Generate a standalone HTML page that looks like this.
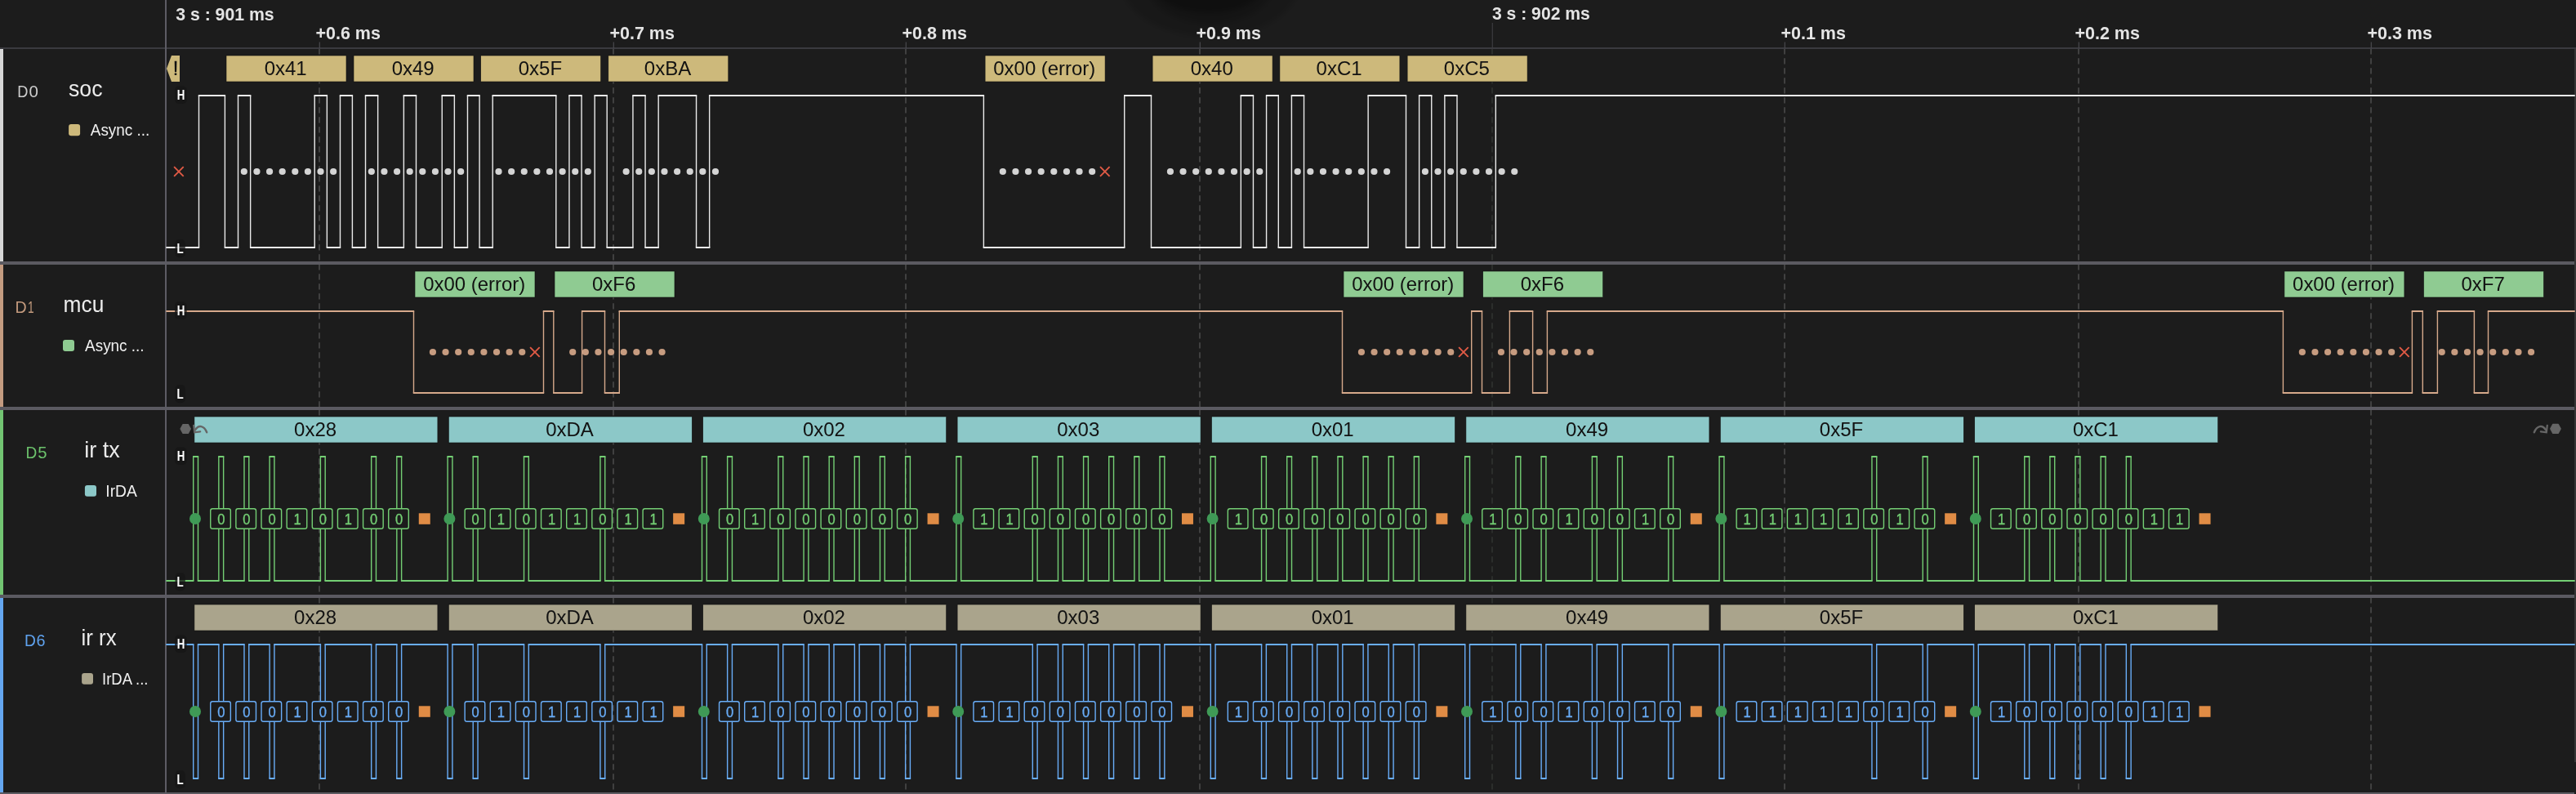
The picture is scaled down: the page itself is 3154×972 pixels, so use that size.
<!DOCTYPE html><html><head><meta charset="utf-8"><style>html,body{margin:0;padding:0;background:#1c1c1c;width:3154px;height:972px;overflow:hidden}svg{display:block;will-change:transform}text{font-family:"Liberation Sans", sans-serif}</style></head><body>
<svg width="3154" height="972" viewBox="0 0 3154 972">
<defs><filter id="blur" x="-50%" y="-50%" width="200%" height="200%"><feGaussianBlur stdDeviation="3"/></filter></defs>
<rect x="0" y="0" width="3154" height="972" fill="#1c1c1c"/>
<g filter="url(#blur)"><ellipse cx="1482" cy="-20" rx="108" ry="65" fill="#000" fill-opacity="0.14"/><ellipse cx="1482" cy="-20" rx="78" ry="49" fill="#000" fill-opacity="0.17"/><ellipse cx="1480" cy="-20" rx="68" ry="36" fill="#000" fill-opacity="0.25"/></g>
<line x1="391" y1="59.2" x2="391" y2="320" stroke="#404040" stroke-width="2" stroke-dasharray="7.3 4.7"/>
<line x1="391" y1="323.2" x2="391" y2="498" stroke="#404040" stroke-width="2" stroke-dasharray="7.3 4.7"/>
<line x1="391" y1="501.2" x2="391" y2="728" stroke="#404040" stroke-width="2" stroke-dasharray="7.3 4.7"/>
<line x1="391" y1="731.2" x2="391" y2="970" stroke="#404040" stroke-width="2" stroke-dasharray="7.3 4.7"/>
<line x1="751" y1="59.2" x2="751" y2="320" stroke="#404040" stroke-width="2" stroke-dasharray="7.3 4.7"/>
<line x1="751" y1="323.2" x2="751" y2="498" stroke="#404040" stroke-width="2" stroke-dasharray="7.3 4.7"/>
<line x1="751" y1="501.2" x2="751" y2="728" stroke="#404040" stroke-width="2" stroke-dasharray="7.3 4.7"/>
<line x1="751" y1="731.2" x2="751" y2="970" stroke="#404040" stroke-width="2" stroke-dasharray="7.3 4.7"/>
<line x1="1109" y1="59.2" x2="1109" y2="320" stroke="#404040" stroke-width="2" stroke-dasharray="7.3 4.7"/>
<line x1="1109" y1="323.2" x2="1109" y2="498" stroke="#404040" stroke-width="2" stroke-dasharray="7.3 4.7"/>
<line x1="1109" y1="501.2" x2="1109" y2="728" stroke="#404040" stroke-width="2" stroke-dasharray="7.3 4.7"/>
<line x1="1109" y1="731.2" x2="1109" y2="970" stroke="#404040" stroke-width="2" stroke-dasharray="7.3 4.7"/>
<line x1="1469" y1="59.2" x2="1469" y2="320" stroke="#404040" stroke-width="2" stroke-dasharray="7.3 4.7"/>
<line x1="1469" y1="323.2" x2="1469" y2="498" stroke="#404040" stroke-width="2" stroke-dasharray="7.3 4.7"/>
<line x1="1469" y1="501.2" x2="1469" y2="728" stroke="#404040" stroke-width="2" stroke-dasharray="7.3 4.7"/>
<line x1="1469" y1="731.2" x2="1469" y2="970" stroke="#404040" stroke-width="2" stroke-dasharray="7.3 4.7"/>
<line x1="1827" y1="59.2" x2="1827" y2="320" stroke="#2c2e2c" stroke-width="2" stroke-dasharray="7.3 4.7"/>
<line x1="1827" y1="323.2" x2="1827" y2="498" stroke="#2c2e2c" stroke-width="2" stroke-dasharray="7.3 4.7"/>
<line x1="1827" y1="501.2" x2="1827" y2="728" stroke="#2c2e2c" stroke-width="2" stroke-dasharray="7.3 4.7"/>
<line x1="1827" y1="731.2" x2="1827" y2="970" stroke="#2c2e2c" stroke-width="2" stroke-dasharray="7.3 4.7"/>
<line x1="2185" y1="59.2" x2="2185" y2="320" stroke="#404040" stroke-width="2" stroke-dasharray="7.3 4.7"/>
<line x1="2185" y1="323.2" x2="2185" y2="498" stroke="#404040" stroke-width="2" stroke-dasharray="7.3 4.7"/>
<line x1="2185" y1="501.2" x2="2185" y2="728" stroke="#404040" stroke-width="2" stroke-dasharray="7.3 4.7"/>
<line x1="2185" y1="731.2" x2="2185" y2="970" stroke="#404040" stroke-width="2" stroke-dasharray="7.3 4.7"/>
<line x1="2545" y1="59.2" x2="2545" y2="320" stroke="#404040" stroke-width="2" stroke-dasharray="7.3 4.7"/>
<line x1="2545" y1="323.2" x2="2545" y2="498" stroke="#404040" stroke-width="2" stroke-dasharray="7.3 4.7"/>
<line x1="2545" y1="501.2" x2="2545" y2="728" stroke="#404040" stroke-width="2" stroke-dasharray="7.3 4.7"/>
<line x1="2545" y1="731.2" x2="2545" y2="970" stroke="#404040" stroke-width="2" stroke-dasharray="7.3 4.7"/>
<line x1="2903" y1="59.2" x2="2903" y2="320" stroke="#404040" stroke-width="2" stroke-dasharray="7.3 4.7"/>
<line x1="2903" y1="323.2" x2="2903" y2="498" stroke="#404040" stroke-width="2" stroke-dasharray="7.3 4.7"/>
<line x1="2903" y1="501.2" x2="2903" y2="728" stroke="#404040" stroke-width="2" stroke-dasharray="7.3 4.7"/>
<line x1="2903" y1="731.2" x2="2903" y2="970" stroke="#404040" stroke-width="2" stroke-dasharray="7.3 4.7"/>
<rect x="0" y="58" width="3154" height="2" fill="#3a3a3f"/>
<rect x="390.7" y="51.5" width="1.2" height="8" fill="#4a4a4e"/>
<rect x="750.7" y="51.5" width="1.2" height="8" fill="#4a4a4e"/>
<rect x="1108.7" y="51.5" width="1.2" height="8" fill="#4a4a4e"/>
<rect x="1468.7" y="51.5" width="1.2" height="8" fill="#4a4a4e"/>
<rect x="1826.7" y="28" width="1.2" height="32" fill="#3c3c40"/>
<rect x="2184.7" y="51.5" width="1.2" height="8" fill="#4a4a4e"/>
<rect x="2544.7" y="51.5" width="1.2" height="8" fill="#4a4a4e"/>
<rect x="2902.7" y="51.5" width="1.2" height="8" fill="#4a4a4e"/>
<text x="215.2" y="24.5" font-size="21.5" font-weight="bold" fill="#e4e4e4" text-anchor="start" textLength="120.5" lengthAdjust="spacingAndGlyphs">3 s : 901 ms</text>
<text x="1826.9" y="24.3" font-size="21.5" font-weight="bold" fill="#e4e4e4" text-anchor="start" textLength="120" lengthAdjust="spacingAndGlyphs">3 s : 902 ms</text>
<text x="386.4" y="47.6" font-size="21.5" font-weight="bold" fill="#e4e4e4" text-anchor="start" textLength="79.5" lengthAdjust="spacingAndGlyphs">+0.6 ms</text>
<text x="746.4" y="47.6" font-size="21.5" font-weight="bold" fill="#e4e4e4" text-anchor="start" textLength="79.5" lengthAdjust="spacingAndGlyphs">+0.7 ms</text>
<text x="1104.4" y="47.6" font-size="21.5" font-weight="bold" fill="#e4e4e4" text-anchor="start" textLength="79.5" lengthAdjust="spacingAndGlyphs">+0.8 ms</text>
<text x="1464.4" y="47.6" font-size="21.5" font-weight="bold" fill="#e4e4e4" text-anchor="start" textLength="79.5" lengthAdjust="spacingAndGlyphs">+0.9 ms</text>
<text x="2180.4" y="47.6" font-size="21.5" font-weight="bold" fill="#e4e4e4" text-anchor="start" textLength="79.5" lengthAdjust="spacingAndGlyphs">+0.1 ms</text>
<text x="2540.4" y="47.6" font-size="21.5" font-weight="bold" fill="#e4e4e4" text-anchor="start" textLength="79.5" lengthAdjust="spacingAndGlyphs">+0.2 ms</text>
<text x="2898.4" y="47.6" font-size="21.5" font-weight="bold" fill="#e4e4e4" text-anchor="start" textLength="79.5" lengthAdjust="spacingAndGlyphs">+0.3 ms</text>
<rect x="0" y="320" width="3152" height="4" fill="#5b5a61"/>
<rect x="0" y="498" width="3152" height="4" fill="#5b5a61"/>
<rect x="0" y="728" width="3152" height="4" fill="#5b5a61"/>
<rect x="0" y="970" width="3152" height="2" fill="#5b5a61"/>
<rect x="3152" y="60" width="2" height="873" fill="#353535"/>
<rect x="202" y="0" width="2" height="972" fill="#5d5c64"/>
<rect x="0" y="60" width="4" height="260" fill="#d6d6d6"/>
<rect x="0" y="324" width="4" height="174" fill="#c39b80"/>
<rect x="0" y="502" width="4" height="226" fill="#72c472"/>
<rect x="0" y="732" width="4" height="238" fill="#64a6f0"/>
<path d="M243.5 303V117M275.4 117V303M291.52 303V117M306.64 117V303M385.24 303V117M400.36 117V303M416.48 303V117M431.4 117V303M447.52 303V117M462.64 117V303M494.38 303V117M509.5 117V303M541.24 303V117M556.36 117V303M572.48 303V117M587.1 117V303M603.22 303V117M680.82 117V303M696.94 303V117M712.06 117V303M728.18 303V117M743.2 117V303M774.94 303V117M790.06 117V303M806.18 303V117M852.54 117V303M868.66 303V117M1204.4 117V303M1376.72 303V117M1409.5 117V303M1519.34 303V117M1534.46 117V303M1550.58 303V117M1565.3 117V303M1581.42 303V117M1596.54 117V303M1675.14 303V117M1721.5 117V303M1737.62 303V117M1752.74 117V303M1768.86 303V117M1783.98 117V303M1831.34 303V117" stroke="#ebebeb" stroke-width="1.4" fill="none"/>
<path d="M203.3 303H244.2M242.8 117H276.1M274.7 303H292.22M290.82 117H307.34M305.94 303H385.94M384.54 117H401.06M399.66 303H417.18M415.78 117H432.1M430.7 303H448.22M446.82 117H463.34M461.94 303H495.08M493.68 117H510.2M508.8 303H541.94M540.54 117H557.06M555.66 303H573.18M571.78 117H587.8M586.4 303H603.92M602.52 117H681.52M680.12 303H697.64M696.24 117H712.76M711.36 303H728.88M727.48 117H743.9M742.5 303H775.64M774.24 117H790.76M789.36 303H806.88M805.48 117H853.24M851.84 303H869.36M867.96 117H1205.1M1203.7 303H1377.42M1376.02 117H1410.2M1408.8 303H1520.04M1518.64 117H1535.16M1533.76 303H1551.28M1549.88 117H1566M1564.6 303H1582.12M1580.72 117H1597.24M1595.84 303H1675.84M1674.44 117H1722.2M1720.8 303H1738.32M1736.92 117H1753.44M1752.04 303H1769.56M1768.16 117H1784.68M1783.28 303H1832.04M1830.64 117H3152.7" stroke="#ebebeb" stroke-width="2" fill="none"/>
<path d="M210 68H220V100H210L204 84Z" fill="#cdb97b"/>
<path d="M213.7 74.8H216.4L216.1 88.2H214Z" fill="#121212"/><rect x="213.6" y="89.4" width="2.8" height="2.6" rx="1" fill="#121212"/>
<rect x="277" y="68" width="147" height="32" fill="#cdb97b" stroke="#101010" stroke-width="0.6"/>
<text x="349.7" y="92.1" font-size="24" fill="#121212" text-anchor="middle">0x41</text>
<circle cx="298.83" cy="210" r="4.1" fill="#d4d4d4"/>
<circle cx="314.45" cy="210" r="4.1" fill="#d4d4d4"/>
<circle cx="330.07" cy="210" r="4.1" fill="#d4d4d4"/>
<circle cx="345.69" cy="210" r="4.1" fill="#d4d4d4"/>
<circle cx="361.31" cy="210" r="4.1" fill="#d4d4d4"/>
<circle cx="376.93" cy="210" r="4.1" fill="#d4d4d4"/>
<circle cx="392.55" cy="210" r="4.1" fill="#d4d4d4"/>
<circle cx="408.17" cy="210" r="4.1" fill="#d4d4d4"/>
<rect x="433" y="68" width="147" height="32" fill="#cdb97b" stroke="#101010" stroke-width="0.6"/>
<text x="505.7" y="92.1" font-size="24" fill="#121212" text-anchor="middle">0x49</text>
<circle cx="454.83" cy="210" r="4.1" fill="#d4d4d4"/>
<circle cx="470.45" cy="210" r="4.1" fill="#d4d4d4"/>
<circle cx="486.07" cy="210" r="4.1" fill="#d4d4d4"/>
<circle cx="501.69" cy="210" r="4.1" fill="#d4d4d4"/>
<circle cx="517.31" cy="210" r="4.1" fill="#d4d4d4"/>
<circle cx="532.93" cy="210" r="4.1" fill="#d4d4d4"/>
<circle cx="548.55" cy="210" r="4.1" fill="#d4d4d4"/>
<circle cx="564.17" cy="210" r="4.1" fill="#d4d4d4"/>
<rect x="588.7" y="68" width="147" height="32" fill="#cdb97b" stroke="#101010" stroke-width="0.6"/>
<text x="661.4" y="92.1" font-size="24" fill="#121212" text-anchor="middle">0x5F</text>
<circle cx="610.53" cy="210" r="4.1" fill="#d4d4d4"/>
<circle cx="626.15" cy="210" r="4.1" fill="#d4d4d4"/>
<circle cx="641.77" cy="210" r="4.1" fill="#d4d4d4"/>
<circle cx="657.39" cy="210" r="4.1" fill="#d4d4d4"/>
<circle cx="673.01" cy="210" r="4.1" fill="#d4d4d4"/>
<circle cx="688.63" cy="210" r="4.1" fill="#d4d4d4"/>
<circle cx="704.25" cy="210" r="4.1" fill="#d4d4d4"/>
<circle cx="719.87" cy="210" r="4.1" fill="#d4d4d4"/>
<rect x="744.8" y="68" width="147" height="32" fill="#cdb97b" stroke="#101010" stroke-width="0.6"/>
<text x="817.5" y="92.1" font-size="24" fill="#121212" text-anchor="middle">0xBA</text>
<circle cx="766.63" cy="210" r="4.1" fill="#d4d4d4"/>
<circle cx="782.25" cy="210" r="4.1" fill="#d4d4d4"/>
<circle cx="797.87" cy="210" r="4.1" fill="#d4d4d4"/>
<circle cx="813.49" cy="210" r="4.1" fill="#d4d4d4"/>
<circle cx="829.11" cy="210" r="4.1" fill="#d4d4d4"/>
<circle cx="844.73" cy="210" r="4.1" fill="#d4d4d4"/>
<circle cx="860.35" cy="210" r="4.1" fill="#d4d4d4"/>
<circle cx="875.97" cy="210" r="4.1" fill="#d4d4d4"/>
<rect x="1206.1" y="68" width="147" height="32" fill="#cdb97b" stroke="#101010" stroke-width="0.6"/>
<text x="1278.8" y="92.1" font-size="24" fill="#121212" text-anchor="middle" textLength="125" lengthAdjust="spacingAndGlyphs">0x00 (error)</text>
<circle cx="1227.83" cy="210" r="4.1" fill="#d4d4d4"/>
<circle cx="1243.45" cy="210" r="4.1" fill="#d4d4d4"/>
<circle cx="1259.07" cy="210" r="4.1" fill="#d4d4d4"/>
<circle cx="1274.69" cy="210" r="4.1" fill="#d4d4d4"/>
<circle cx="1290.31" cy="210" r="4.1" fill="#d4d4d4"/>
<circle cx="1305.93" cy="210" r="4.1" fill="#d4d4d4"/>
<circle cx="1321.55" cy="210" r="4.1" fill="#d4d4d4"/>
<circle cx="1337.17" cy="210" r="4.1" fill="#d4d4d4"/>
<path d="M1346.99 204.2L1358.59 215.8M1346.99 215.8L1358.59 204.2" stroke="#e05a45" stroke-width="1.9" fill="none"/>
<rect x="1411.1" y="68" width="147" height="32" fill="#cdb97b" stroke="#101010" stroke-width="0.6"/>
<text x="1483.8" y="92.1" font-size="24" fill="#121212" text-anchor="middle">0x40</text>
<circle cx="1432.93" cy="210" r="4.1" fill="#d4d4d4"/>
<circle cx="1448.55" cy="210" r="4.1" fill="#d4d4d4"/>
<circle cx="1464.17" cy="210" r="4.1" fill="#d4d4d4"/>
<circle cx="1479.79" cy="210" r="4.1" fill="#d4d4d4"/>
<circle cx="1495.41" cy="210" r="4.1" fill="#d4d4d4"/>
<circle cx="1511.03" cy="210" r="4.1" fill="#d4d4d4"/>
<circle cx="1526.65" cy="210" r="4.1" fill="#d4d4d4"/>
<circle cx="1542.27" cy="210" r="4.1" fill="#d4d4d4"/>
<rect x="1566.9" y="68" width="147" height="32" fill="#cdb97b" stroke="#101010" stroke-width="0.6"/>
<text x="1639.6" y="92.1" font-size="24" fill="#121212" text-anchor="middle">0xC1</text>
<circle cx="1588.73" cy="210" r="4.1" fill="#d4d4d4"/>
<circle cx="1604.35" cy="210" r="4.1" fill="#d4d4d4"/>
<circle cx="1619.97" cy="210" r="4.1" fill="#d4d4d4"/>
<circle cx="1635.59" cy="210" r="4.1" fill="#d4d4d4"/>
<circle cx="1651.21" cy="210" r="4.1" fill="#d4d4d4"/>
<circle cx="1666.83" cy="210" r="4.1" fill="#d4d4d4"/>
<circle cx="1682.45" cy="210" r="4.1" fill="#d4d4d4"/>
<circle cx="1698.07" cy="210" r="4.1" fill="#d4d4d4"/>
<rect x="1723.1" y="68" width="147" height="32" fill="#cdb97b" stroke="#101010" stroke-width="0.6"/>
<text x="1795.8" y="92.1" font-size="24" fill="#121212" text-anchor="middle">0xC5</text>
<circle cx="1744.93" cy="210" r="4.1" fill="#d4d4d4"/>
<circle cx="1760.55" cy="210" r="4.1" fill="#d4d4d4"/>
<circle cx="1776.17" cy="210" r="4.1" fill="#d4d4d4"/>
<circle cx="1791.79" cy="210" r="4.1" fill="#d4d4d4"/>
<circle cx="1807.41" cy="210" r="4.1" fill="#d4d4d4"/>
<circle cx="1823.03" cy="210" r="4.1" fill="#d4d4d4"/>
<circle cx="1838.65" cy="210" r="4.1" fill="#d4d4d4"/>
<circle cx="1854.27" cy="210" r="4.1" fill="#d4d4d4"/>
<path d="M213.1 204.2L224.7 215.8M213.1 215.8L224.7 204.2" stroke="#e05a45" stroke-width="1.9" fill="none"/>
<path d="M506.5 381V481M665.5 481V381M677.8 381V481M712.6 481V381M740.5 381V481M758.3 481V381M1643.5 381V481M1801.7 481V381M1814.5 381V481M1848.4 481V381M1876.6 381V481M1894.4 481V381M2795.4 381V481M2953.4 481V381M2966.3 381V481M2984.4 481V381M3029.4 381V481M3046.5 481V381" stroke="#d6a98b" stroke-width="1.4" fill="none"/>
<path d="M203.3 381H507.2M505.8 481H666.2M664.8 381H678.5M677.1 481H713.3M711.9 381H741.2M739.8 481H759M757.6 381H1644.2M1642.8 481H1802.4M1801 381H1815.2M1813.8 481H1849.1M1847.7 381H1877.3M1875.9 481H1895.1M1893.7 381H2796.1M2794.7 481H2954.1M2952.7 381H2967M2965.6 481H2985.1M2983.7 381H3030.1M3028.7 481H3047.2M3045.8 381H3152.7" stroke="#d6a98b" stroke-width="2" fill="none"/>
<rect x="508" y="332" width="147" height="32" fill="#8fcb92" stroke="#101010" stroke-width="0.6"/>
<text x="580.7" y="356.1" font-size="24" fill="#121212" text-anchor="middle" textLength="125" lengthAdjust="spacingAndGlyphs">0x00 (error)</text>
<rect x="679" y="332" width="147" height="32" fill="#8fcb92" stroke="#101010" stroke-width="0.6"/>
<text x="751.7" y="356.1" font-size="24" fill="#121212" text-anchor="middle">0xF6</text>
<circle cx="529.93" cy="431" r="4.1" fill="#c79c80"/>
<circle cx="545.55" cy="431" r="4.1" fill="#c79c80"/>
<circle cx="561.17" cy="431" r="4.1" fill="#c79c80"/>
<circle cx="576.79" cy="431" r="4.1" fill="#c79c80"/>
<circle cx="592.41" cy="431" r="4.1" fill="#c79c80"/>
<circle cx="608.03" cy="431" r="4.1" fill="#c79c80"/>
<circle cx="623.65" cy="431" r="4.1" fill="#c79c80"/>
<circle cx="639.27" cy="431" r="4.1" fill="#c79c80"/>
<path d="M649.09 425.2L660.69 436.8M649.09 436.8L660.69 425.2" stroke="#e05a45" stroke-width="1.9" fill="none"/>
<circle cx="701.23" cy="431" r="4.1" fill="#c79c80"/>
<circle cx="716.85" cy="431" r="4.1" fill="#c79c80"/>
<circle cx="732.47" cy="431" r="4.1" fill="#c79c80"/>
<circle cx="748.09" cy="431" r="4.1" fill="#c79c80"/>
<circle cx="763.71" cy="431" r="4.1" fill="#c79c80"/>
<circle cx="779.33" cy="431" r="4.1" fill="#c79c80"/>
<circle cx="794.95" cy="431" r="4.1" fill="#c79c80"/>
<circle cx="810.57" cy="431" r="4.1" fill="#c79c80"/>
<rect x="1645" y="332" width="147" height="32" fill="#8fcb92" stroke="#101010" stroke-width="0.6"/>
<text x="1717.7" y="356.1" font-size="24" fill="#121212" text-anchor="middle" textLength="125" lengthAdjust="spacingAndGlyphs">0x00 (error)</text>
<rect x="1815.7" y="332" width="147" height="32" fill="#8fcb92" stroke="#101010" stroke-width="0.6"/>
<text x="1888.4" y="356.1" font-size="24" fill="#121212" text-anchor="middle">0xF6</text>
<circle cx="1666.93" cy="431" r="4.1" fill="#c79c80"/>
<circle cx="1682.55" cy="431" r="4.1" fill="#c79c80"/>
<circle cx="1698.17" cy="431" r="4.1" fill="#c79c80"/>
<circle cx="1713.79" cy="431" r="4.1" fill="#c79c80"/>
<circle cx="1729.41" cy="431" r="4.1" fill="#c79c80"/>
<circle cx="1745.03" cy="431" r="4.1" fill="#c79c80"/>
<circle cx="1760.65" cy="431" r="4.1" fill="#c79c80"/>
<circle cx="1776.27" cy="431" r="4.1" fill="#c79c80"/>
<path d="M1786.09 425.2L1797.69 436.8M1786.09 436.8L1797.69 425.2" stroke="#e05a45" stroke-width="1.9" fill="none"/>
<circle cx="1837.93" cy="431" r="4.1" fill="#c79c80"/>
<circle cx="1853.55" cy="431" r="4.1" fill="#c79c80"/>
<circle cx="1869.17" cy="431" r="4.1" fill="#c79c80"/>
<circle cx="1884.79" cy="431" r="4.1" fill="#c79c80"/>
<circle cx="1900.41" cy="431" r="4.1" fill="#c79c80"/>
<circle cx="1916.03" cy="431" r="4.1" fill="#c79c80"/>
<circle cx="1931.65" cy="431" r="4.1" fill="#c79c80"/>
<circle cx="1947.27" cy="431" r="4.1" fill="#c79c80"/>
<rect x="2796.9" y="332" width="147" height="32" fill="#8fcb92" stroke="#101010" stroke-width="0.6"/>
<text x="2869.6" y="356.1" font-size="24" fill="#121212" text-anchor="middle" textLength="125" lengthAdjust="spacingAndGlyphs">0x00 (error)</text>
<rect x="2967.5" y="332" width="147" height="32" fill="#8fcb92" stroke="#101010" stroke-width="0.6"/>
<text x="3040.2" y="356.1" font-size="24" fill="#121212" text-anchor="middle">0xF7</text>
<circle cx="2818.83" cy="431" r="4.1" fill="#c79c80"/>
<circle cx="2834.45" cy="431" r="4.1" fill="#c79c80"/>
<circle cx="2850.07" cy="431" r="4.1" fill="#c79c80"/>
<circle cx="2865.69" cy="431" r="4.1" fill="#c79c80"/>
<circle cx="2881.31" cy="431" r="4.1" fill="#c79c80"/>
<circle cx="2896.93" cy="431" r="4.1" fill="#c79c80"/>
<circle cx="2912.55" cy="431" r="4.1" fill="#c79c80"/>
<circle cx="2928.17" cy="431" r="4.1" fill="#c79c80"/>
<path d="M2937.99 425.2L2949.59 436.8M2937.99 436.8L2949.59 425.2" stroke="#e05a45" stroke-width="1.9" fill="none"/>
<circle cx="2989.73" cy="431" r="4.1" fill="#c79c80"/>
<circle cx="3005.35" cy="431" r="4.1" fill="#c79c80"/>
<circle cx="3020.97" cy="431" r="4.1" fill="#c79c80"/>
<circle cx="3036.59" cy="431" r="4.1" fill="#c79c80"/>
<circle cx="3052.21" cy="431" r="4.1" fill="#c79c80"/>
<circle cx="3067.83" cy="431" r="4.1" fill="#c79c80"/>
<circle cx="3083.45" cy="431" r="4.1" fill="#c79c80"/>
<circle cx="3099.07" cy="431" r="4.1" fill="#c79c80"/>
<path d="M236.7 711V559M242.5 559V711M267.84 711V559M273.64 559V711M298.98 711V559M304.78 559V711M330.12 711V559M335.92 559V711M392.4 711V559M398.2 559V711M454.68 711V559M460.48 559V711M485.82 711V559M491.62 559V711M548.1 711V559M553.9 559V711M579.24 711V559M585.04 559V711M641.52 711V559M647.32 559V711M734.94 711V559M740.74 559V711M859.5 711V559M865.3 559V711M890.64 711V559M896.44 559V711M952.92 711V559M958.72 559V711M984.06 711V559M989.86 559V711M1015.2 711V559M1021 559V711M1046.34 711V559M1052.14 559V711M1077.48 711V559M1083.28 559V711M1108.62 711V559M1114.42 559V711M1170.9 711V559M1176.7 559V711M1264.32 711V559M1270.12 559V711M1295.46 711V559M1301.26 559V711M1326.6 711V559M1332.4 559V711M1357.74 711V559M1363.54 559V711M1388.88 711V559M1394.68 559V711M1420.02 711V559M1425.82 559V711M1482.3 711V559M1488.1 559V711M1544.58 711V559M1550.38 559V711M1575.72 711V559M1581.52 559V711M1606.86 711V559M1612.66 559V711M1638 711V559M1643.8 559V711M1669.14 711V559M1674.94 559V711M1700.28 711V559M1706.08 559V711M1731.42 711V559M1737.22 559V711M1793.7 711V559M1799.5 559V711M1855.98 711V559M1861.78 559V711M1887.12 711V559M1892.92 559V711M1949.4 711V559M1955.2 559V711M1980.54 711V559M1986.34 559V711M2042.82 711V559M2048.62 559V711M2105.1 711V559M2110.9 559V711M2291.94 711V559M2297.74 559V711M2354.22 711V559M2360.02 559V711M2416.5 711V559M2422.3 559V711M2478.78 711V559M2484.58 559V711M2509.92 711V559M2515.72 559V711M2541.06 711V559M2546.86 559V711M2572.2 711V559M2578 559V711M2603.34 711V559M2609.14 559V711" stroke="#74cf74" stroke-width="1.4" fill="none"/>
<path d="M203.3 711H237.4M236 559H243.2M241.8 711H268.54M267.14 559H274.34M272.94 711H299.68M298.28 559H305.48M304.08 711H330.82M329.42 559H336.62M335.22 711H393.1M391.7 559H398.9M397.5 711H455.38M453.98 559H461.18M459.78 711H486.52M485.12 559H492.32M490.92 711H548.8M547.4 559H554.6M553.2 711H579.94M578.54 559H585.74M584.34 711H642.22M640.82 559H648.02M646.62 711H735.64M734.24 559H741.44M740.04 711H860.2M858.8 559H866M864.6 711H891.34M889.94 559H897.14M895.74 711H953.62M952.22 559H959.42M958.02 711H984.76M983.36 559H990.56M989.16 711H1015.9M1014.5 559H1021.7M1020.3 711H1047.04M1045.64 559H1052.84M1051.44 711H1078.18M1076.78 559H1083.98M1082.58 711H1109.32M1107.92 559H1115.12M1113.72 711H1171.6M1170.2 559H1177.4M1176 711H1265.02M1263.62 559H1270.82M1269.42 711H1296.16M1294.76 559H1301.96M1300.56 711H1327.3M1325.9 559H1333.1M1331.7 711H1358.44M1357.04 559H1364.24M1362.84 711H1389.58M1388.18 559H1395.38M1393.98 711H1420.72M1419.32 559H1426.52M1425.12 711H1483M1481.6 559H1488.8M1487.4 711H1545.28M1543.88 559H1551.08M1549.68 711H1576.42M1575.02 559H1582.22M1580.82 711H1607.56M1606.16 559H1613.36M1611.96 711H1638.7M1637.3 559H1644.5M1643.1 711H1669.84M1668.44 559H1675.64M1674.24 711H1700.98M1699.58 559H1706.78M1705.38 711H1732.12M1730.72 559H1737.92M1736.52 711H1794.4M1793 559H1800.2M1798.8 711H1856.68M1855.28 559H1862.48M1861.08 711H1887.82M1886.42 559H1893.62M1892.22 711H1950.1M1948.7 559H1955.9M1954.5 711H1981.24M1979.84 559H1987.04M1985.64 711H2043.52M2042.12 559H2049.32M2047.92 711H2105.8M2104.4 559H2111.6M2110.2 711H2292.64M2291.24 559H2298.44M2297.04 711H2354.92M2353.52 559H2360.72M2359.32 711H2417.2M2415.8 559H2423M2421.6 711H2479.48M2478.08 559H2485.28M2483.88 711H2510.62M2509.22 559H2516.42M2515.02 711H2541.76M2540.36 559H2547.56M2546.16 711H2572.9M2571.5 559H2578.7M2577.3 711H2604.04M2602.64 559H2609.84M2608.44 711H3152.7" stroke="#74cf74" stroke-width="2" fill="none"/>
<rect x="237.9" y="510" width="298" height="32" fill="#8cc8c8" stroke="#101010" stroke-width="0.6"/>
<text x="386.1" y="534.1" font-size="24" fill="#121212" text-anchor="middle">0x28</text>
<circle cx="239" cy="635" r="7" fill="#3f9a56"/>
<rect x="257.74" y="622.7" width="24.6" height="24.6" rx="2.6" fill="#1c1c1c" stroke="#74cf74" stroke-width="1.4"/>
<text x="270.74" y="641.6" font-size="18" fill="#74cf74" stroke="#74cf74" stroke-width="0.35" text-anchor="middle" textLength="9.2" lengthAdjust="spacingAndGlyphs">0</text>
<rect x="288.88" y="622.7" width="24.6" height="24.6" rx="2.6" fill="#1c1c1c" stroke="#74cf74" stroke-width="1.4"/>
<text x="301.88" y="641.6" font-size="18" fill="#74cf74" stroke="#74cf74" stroke-width="0.35" text-anchor="middle" textLength="9.2" lengthAdjust="spacingAndGlyphs">0</text>
<rect x="320.02" y="622.7" width="24.6" height="24.6" rx="2.6" fill="#1c1c1c" stroke="#74cf74" stroke-width="1.4"/>
<text x="333.02" y="641.6" font-size="18" fill="#74cf74" stroke="#74cf74" stroke-width="0.35" text-anchor="middle" textLength="9.2" lengthAdjust="spacingAndGlyphs">0</text>
<rect x="351.16" y="622.7" width="24.6" height="24.6" rx="2.6" fill="#1c1c1c" stroke="#74cf74" stroke-width="1.4"/>
<text x="364.16" y="641.6" font-size="18" fill="#74cf74" stroke="#74cf74" stroke-width="0.35" text-anchor="middle" textLength="9.2" lengthAdjust="spacingAndGlyphs">1</text>
<rect x="382.3" y="622.7" width="24.6" height="24.6" rx="2.6" fill="#1c1c1c" stroke="#74cf74" stroke-width="1.4"/>
<text x="395.3" y="641.6" font-size="18" fill="#74cf74" stroke="#74cf74" stroke-width="0.35" text-anchor="middle" textLength="9.2" lengthAdjust="spacingAndGlyphs">0</text>
<rect x="413.44" y="622.7" width="24.6" height="24.6" rx="2.6" fill="#1c1c1c" stroke="#74cf74" stroke-width="1.4"/>
<text x="426.44" y="641.6" font-size="18" fill="#74cf74" stroke="#74cf74" stroke-width="0.35" text-anchor="middle" textLength="9.2" lengthAdjust="spacingAndGlyphs">1</text>
<rect x="444.58" y="622.7" width="24.6" height="24.6" rx="2.6" fill="#1c1c1c" stroke="#74cf74" stroke-width="1.4"/>
<text x="457.58" y="641.6" font-size="18" fill="#74cf74" stroke="#74cf74" stroke-width="0.35" text-anchor="middle" textLength="9.2" lengthAdjust="spacingAndGlyphs">0</text>
<rect x="475.72" y="622.7" width="24.6" height="24.6" rx="2.6" fill="#1c1c1c" stroke="#74cf74" stroke-width="1.4"/>
<text x="488.72" y="641.6" font-size="18" fill="#74cf74" stroke="#74cf74" stroke-width="0.35" text-anchor="middle" textLength="9.2" lengthAdjust="spacingAndGlyphs">0</text>
<rect x="512.76" y="628.3" width="14" height="13.5" fill="#e08c45"/>
<rect x="549.3" y="510" width="298" height="32" fill="#8cc8c8" stroke="#101010" stroke-width="0.6"/>
<text x="697.5" y="534.1" font-size="24" fill="#121212" text-anchor="middle">0xDA</text>
<circle cx="550.4" cy="635" r="7" fill="#3f9a56"/>
<rect x="569.14" y="622.7" width="24.6" height="24.6" rx="2.6" fill="#1c1c1c" stroke="#74cf74" stroke-width="1.4"/>
<text x="582.14" y="641.6" font-size="18" fill="#74cf74" stroke="#74cf74" stroke-width="0.35" text-anchor="middle" textLength="9.2" lengthAdjust="spacingAndGlyphs">0</text>
<rect x="600.28" y="622.7" width="24.6" height="24.6" rx="2.6" fill="#1c1c1c" stroke="#74cf74" stroke-width="1.4"/>
<text x="613.28" y="641.6" font-size="18" fill="#74cf74" stroke="#74cf74" stroke-width="0.35" text-anchor="middle" textLength="9.2" lengthAdjust="spacingAndGlyphs">1</text>
<rect x="631.42" y="622.7" width="24.6" height="24.6" rx="2.6" fill="#1c1c1c" stroke="#74cf74" stroke-width="1.4"/>
<text x="644.42" y="641.6" font-size="18" fill="#74cf74" stroke="#74cf74" stroke-width="0.35" text-anchor="middle" textLength="9.2" lengthAdjust="spacingAndGlyphs">0</text>
<rect x="662.56" y="622.7" width="24.6" height="24.6" rx="2.6" fill="#1c1c1c" stroke="#74cf74" stroke-width="1.4"/>
<text x="675.56" y="641.6" font-size="18" fill="#74cf74" stroke="#74cf74" stroke-width="0.35" text-anchor="middle" textLength="9.2" lengthAdjust="spacingAndGlyphs">1</text>
<rect x="693.7" y="622.7" width="24.6" height="24.6" rx="2.6" fill="#1c1c1c" stroke="#74cf74" stroke-width="1.4"/>
<text x="706.7" y="641.6" font-size="18" fill="#74cf74" stroke="#74cf74" stroke-width="0.35" text-anchor="middle" textLength="9.2" lengthAdjust="spacingAndGlyphs">1</text>
<rect x="724.84" y="622.7" width="24.6" height="24.6" rx="2.6" fill="#1c1c1c" stroke="#74cf74" stroke-width="1.4"/>
<text x="737.84" y="641.6" font-size="18" fill="#74cf74" stroke="#74cf74" stroke-width="0.35" text-anchor="middle" textLength="9.2" lengthAdjust="spacingAndGlyphs">0</text>
<rect x="755.98" y="622.7" width="24.6" height="24.6" rx="2.6" fill="#1c1c1c" stroke="#74cf74" stroke-width="1.4"/>
<text x="768.98" y="641.6" font-size="18" fill="#74cf74" stroke="#74cf74" stroke-width="0.35" text-anchor="middle" textLength="9.2" lengthAdjust="spacingAndGlyphs">1</text>
<rect x="787.12" y="622.7" width="24.6" height="24.6" rx="2.6" fill="#1c1c1c" stroke="#74cf74" stroke-width="1.4"/>
<text x="800.12" y="641.6" font-size="18" fill="#74cf74" stroke="#74cf74" stroke-width="0.35" text-anchor="middle" textLength="9.2" lengthAdjust="spacingAndGlyphs">1</text>
<rect x="824.16" y="628.3" width="14" height="13.5" fill="#e08c45"/>
<rect x="860.7" y="510" width="298" height="32" fill="#8cc8c8" stroke="#101010" stroke-width="0.6"/>
<text x="1008.9" y="534.1" font-size="24" fill="#121212" text-anchor="middle">0x02</text>
<circle cx="861.8" cy="635" r="7" fill="#3f9a56"/>
<rect x="880.54" y="622.7" width="24.6" height="24.6" rx="2.6" fill="#1c1c1c" stroke="#74cf74" stroke-width="1.4"/>
<text x="893.54" y="641.6" font-size="18" fill="#74cf74" stroke="#74cf74" stroke-width="0.35" text-anchor="middle" textLength="9.2" lengthAdjust="spacingAndGlyphs">0</text>
<rect x="911.68" y="622.7" width="24.6" height="24.6" rx="2.6" fill="#1c1c1c" stroke="#74cf74" stroke-width="1.4"/>
<text x="924.68" y="641.6" font-size="18" fill="#74cf74" stroke="#74cf74" stroke-width="0.35" text-anchor="middle" textLength="9.2" lengthAdjust="spacingAndGlyphs">1</text>
<rect x="942.82" y="622.7" width="24.6" height="24.6" rx="2.6" fill="#1c1c1c" stroke="#74cf74" stroke-width="1.4"/>
<text x="955.82" y="641.6" font-size="18" fill="#74cf74" stroke="#74cf74" stroke-width="0.35" text-anchor="middle" textLength="9.2" lengthAdjust="spacingAndGlyphs">0</text>
<rect x="973.96" y="622.7" width="24.6" height="24.6" rx="2.6" fill="#1c1c1c" stroke="#74cf74" stroke-width="1.4"/>
<text x="986.96" y="641.6" font-size="18" fill="#74cf74" stroke="#74cf74" stroke-width="0.35" text-anchor="middle" textLength="9.2" lengthAdjust="spacingAndGlyphs">0</text>
<rect x="1005.1" y="622.7" width="24.6" height="24.6" rx="2.6" fill="#1c1c1c" stroke="#74cf74" stroke-width="1.4"/>
<text x="1018.1" y="641.6" font-size="18" fill="#74cf74" stroke="#74cf74" stroke-width="0.35" text-anchor="middle" textLength="9.2" lengthAdjust="spacingAndGlyphs">0</text>
<rect x="1036.24" y="622.7" width="24.6" height="24.6" rx="2.6" fill="#1c1c1c" stroke="#74cf74" stroke-width="1.4"/>
<text x="1049.24" y="641.6" font-size="18" fill="#74cf74" stroke="#74cf74" stroke-width="0.35" text-anchor="middle" textLength="9.2" lengthAdjust="spacingAndGlyphs">0</text>
<rect x="1067.38" y="622.7" width="24.6" height="24.6" rx="2.6" fill="#1c1c1c" stroke="#74cf74" stroke-width="1.4"/>
<text x="1080.38" y="641.6" font-size="18" fill="#74cf74" stroke="#74cf74" stroke-width="0.35" text-anchor="middle" textLength="9.2" lengthAdjust="spacingAndGlyphs">0</text>
<rect x="1098.52" y="622.7" width="24.6" height="24.6" rx="2.6" fill="#1c1c1c" stroke="#74cf74" stroke-width="1.4"/>
<text x="1111.52" y="641.6" font-size="18" fill="#74cf74" stroke="#74cf74" stroke-width="0.35" text-anchor="middle" textLength="9.2" lengthAdjust="spacingAndGlyphs">0</text>
<rect x="1135.56" y="628.3" width="14" height="13.5" fill="#e08c45"/>
<rect x="1172.1" y="510" width="298" height="32" fill="#8cc8c8" stroke="#101010" stroke-width="0.6"/>
<text x="1320.3" y="534.1" font-size="24" fill="#121212" text-anchor="middle">0x03</text>
<circle cx="1173.2" cy="635" r="7" fill="#3f9a56"/>
<rect x="1191.94" y="622.7" width="24.6" height="24.6" rx="2.6" fill="#1c1c1c" stroke="#74cf74" stroke-width="1.4"/>
<text x="1204.94" y="641.6" font-size="18" fill="#74cf74" stroke="#74cf74" stroke-width="0.35" text-anchor="middle" textLength="9.2" lengthAdjust="spacingAndGlyphs">1</text>
<rect x="1223.08" y="622.7" width="24.6" height="24.6" rx="2.6" fill="#1c1c1c" stroke="#74cf74" stroke-width="1.4"/>
<text x="1236.08" y="641.6" font-size="18" fill="#74cf74" stroke="#74cf74" stroke-width="0.35" text-anchor="middle" textLength="9.2" lengthAdjust="spacingAndGlyphs">1</text>
<rect x="1254.22" y="622.7" width="24.6" height="24.6" rx="2.6" fill="#1c1c1c" stroke="#74cf74" stroke-width="1.4"/>
<text x="1267.22" y="641.6" font-size="18" fill="#74cf74" stroke="#74cf74" stroke-width="0.35" text-anchor="middle" textLength="9.2" lengthAdjust="spacingAndGlyphs">0</text>
<rect x="1285.36" y="622.7" width="24.6" height="24.6" rx="2.6" fill="#1c1c1c" stroke="#74cf74" stroke-width="1.4"/>
<text x="1298.36" y="641.6" font-size="18" fill="#74cf74" stroke="#74cf74" stroke-width="0.35" text-anchor="middle" textLength="9.2" lengthAdjust="spacingAndGlyphs">0</text>
<rect x="1316.5" y="622.7" width="24.6" height="24.6" rx="2.6" fill="#1c1c1c" stroke="#74cf74" stroke-width="1.4"/>
<text x="1329.5" y="641.6" font-size="18" fill="#74cf74" stroke="#74cf74" stroke-width="0.35" text-anchor="middle" textLength="9.2" lengthAdjust="spacingAndGlyphs">0</text>
<rect x="1347.64" y="622.7" width="24.6" height="24.6" rx="2.6" fill="#1c1c1c" stroke="#74cf74" stroke-width="1.4"/>
<text x="1360.64" y="641.6" font-size="18" fill="#74cf74" stroke="#74cf74" stroke-width="0.35" text-anchor="middle" textLength="9.2" lengthAdjust="spacingAndGlyphs">0</text>
<rect x="1378.78" y="622.7" width="24.6" height="24.6" rx="2.6" fill="#1c1c1c" stroke="#74cf74" stroke-width="1.4"/>
<text x="1391.78" y="641.6" font-size="18" fill="#74cf74" stroke="#74cf74" stroke-width="0.35" text-anchor="middle" textLength="9.2" lengthAdjust="spacingAndGlyphs">0</text>
<rect x="1409.92" y="622.7" width="24.6" height="24.6" rx="2.6" fill="#1c1c1c" stroke="#74cf74" stroke-width="1.4"/>
<text x="1422.92" y="641.6" font-size="18" fill="#74cf74" stroke="#74cf74" stroke-width="0.35" text-anchor="middle" textLength="9.2" lengthAdjust="spacingAndGlyphs">0</text>
<rect x="1446.96" y="628.3" width="14" height="13.5" fill="#e08c45"/>
<rect x="1483.5" y="510" width="298" height="32" fill="#8cc8c8" stroke="#101010" stroke-width="0.6"/>
<text x="1631.7" y="534.1" font-size="24" fill="#121212" text-anchor="middle">0x01</text>
<circle cx="1484.6" cy="635" r="7" fill="#3f9a56"/>
<rect x="1503.34" y="622.7" width="24.6" height="24.6" rx="2.6" fill="#1c1c1c" stroke="#74cf74" stroke-width="1.4"/>
<text x="1516.34" y="641.6" font-size="18" fill="#74cf74" stroke="#74cf74" stroke-width="0.35" text-anchor="middle" textLength="9.2" lengthAdjust="spacingAndGlyphs">1</text>
<rect x="1534.48" y="622.7" width="24.6" height="24.6" rx="2.6" fill="#1c1c1c" stroke="#74cf74" stroke-width="1.4"/>
<text x="1547.48" y="641.6" font-size="18" fill="#74cf74" stroke="#74cf74" stroke-width="0.35" text-anchor="middle" textLength="9.2" lengthAdjust="spacingAndGlyphs">0</text>
<rect x="1565.62" y="622.7" width="24.6" height="24.6" rx="2.6" fill="#1c1c1c" stroke="#74cf74" stroke-width="1.4"/>
<text x="1578.62" y="641.6" font-size="18" fill="#74cf74" stroke="#74cf74" stroke-width="0.35" text-anchor="middle" textLength="9.2" lengthAdjust="spacingAndGlyphs">0</text>
<rect x="1596.76" y="622.7" width="24.6" height="24.6" rx="2.6" fill="#1c1c1c" stroke="#74cf74" stroke-width="1.4"/>
<text x="1609.76" y="641.6" font-size="18" fill="#74cf74" stroke="#74cf74" stroke-width="0.35" text-anchor="middle" textLength="9.2" lengthAdjust="spacingAndGlyphs">0</text>
<rect x="1627.9" y="622.7" width="24.6" height="24.6" rx="2.6" fill="#1c1c1c" stroke="#74cf74" stroke-width="1.4"/>
<text x="1640.9" y="641.6" font-size="18" fill="#74cf74" stroke="#74cf74" stroke-width="0.35" text-anchor="middle" textLength="9.2" lengthAdjust="spacingAndGlyphs">0</text>
<rect x="1659.04" y="622.7" width="24.6" height="24.6" rx="2.6" fill="#1c1c1c" stroke="#74cf74" stroke-width="1.4"/>
<text x="1672.04" y="641.6" font-size="18" fill="#74cf74" stroke="#74cf74" stroke-width="0.35" text-anchor="middle" textLength="9.2" lengthAdjust="spacingAndGlyphs">0</text>
<rect x="1690.18" y="622.7" width="24.6" height="24.6" rx="2.6" fill="#1c1c1c" stroke="#74cf74" stroke-width="1.4"/>
<text x="1703.18" y="641.6" font-size="18" fill="#74cf74" stroke="#74cf74" stroke-width="0.35" text-anchor="middle" textLength="9.2" lengthAdjust="spacingAndGlyphs">0</text>
<rect x="1721.32" y="622.7" width="24.6" height="24.6" rx="2.6" fill="#1c1c1c" stroke="#74cf74" stroke-width="1.4"/>
<text x="1734.32" y="641.6" font-size="18" fill="#74cf74" stroke="#74cf74" stroke-width="0.35" text-anchor="middle" textLength="9.2" lengthAdjust="spacingAndGlyphs">0</text>
<rect x="1758.36" y="628.3" width="14" height="13.5" fill="#e08c45"/>
<rect x="1794.9" y="510" width="298" height="32" fill="#8cc8c8" stroke="#101010" stroke-width="0.6"/>
<text x="1943.1" y="534.1" font-size="24" fill="#121212" text-anchor="middle">0x49</text>
<circle cx="1796" cy="635" r="7" fill="#3f9a56"/>
<rect x="1814.74" y="622.7" width="24.6" height="24.6" rx="2.6" fill="#1c1c1c" stroke="#74cf74" stroke-width="1.4"/>
<text x="1827.74" y="641.6" font-size="18" fill="#74cf74" stroke="#74cf74" stroke-width="0.35" text-anchor="middle" textLength="9.2" lengthAdjust="spacingAndGlyphs">1</text>
<rect x="1845.88" y="622.7" width="24.6" height="24.6" rx="2.6" fill="#1c1c1c" stroke="#74cf74" stroke-width="1.4"/>
<text x="1858.88" y="641.6" font-size="18" fill="#74cf74" stroke="#74cf74" stroke-width="0.35" text-anchor="middle" textLength="9.2" lengthAdjust="spacingAndGlyphs">0</text>
<rect x="1877.02" y="622.7" width="24.6" height="24.6" rx="2.6" fill="#1c1c1c" stroke="#74cf74" stroke-width="1.4"/>
<text x="1890.02" y="641.6" font-size="18" fill="#74cf74" stroke="#74cf74" stroke-width="0.35" text-anchor="middle" textLength="9.2" lengthAdjust="spacingAndGlyphs">0</text>
<rect x="1908.16" y="622.7" width="24.6" height="24.6" rx="2.6" fill="#1c1c1c" stroke="#74cf74" stroke-width="1.4"/>
<text x="1921.16" y="641.6" font-size="18" fill="#74cf74" stroke="#74cf74" stroke-width="0.35" text-anchor="middle" textLength="9.2" lengthAdjust="spacingAndGlyphs">1</text>
<rect x="1939.3" y="622.7" width="24.6" height="24.6" rx="2.6" fill="#1c1c1c" stroke="#74cf74" stroke-width="1.4"/>
<text x="1952.3" y="641.6" font-size="18" fill="#74cf74" stroke="#74cf74" stroke-width="0.35" text-anchor="middle" textLength="9.2" lengthAdjust="spacingAndGlyphs">0</text>
<rect x="1970.44" y="622.7" width="24.6" height="24.6" rx="2.6" fill="#1c1c1c" stroke="#74cf74" stroke-width="1.4"/>
<text x="1983.44" y="641.6" font-size="18" fill="#74cf74" stroke="#74cf74" stroke-width="0.35" text-anchor="middle" textLength="9.2" lengthAdjust="spacingAndGlyphs">0</text>
<rect x="2001.58" y="622.7" width="24.6" height="24.6" rx="2.6" fill="#1c1c1c" stroke="#74cf74" stroke-width="1.4"/>
<text x="2014.58" y="641.6" font-size="18" fill="#74cf74" stroke="#74cf74" stroke-width="0.35" text-anchor="middle" textLength="9.2" lengthAdjust="spacingAndGlyphs">1</text>
<rect x="2032.72" y="622.7" width="24.6" height="24.6" rx="2.6" fill="#1c1c1c" stroke="#74cf74" stroke-width="1.4"/>
<text x="2045.72" y="641.6" font-size="18" fill="#74cf74" stroke="#74cf74" stroke-width="0.35" text-anchor="middle" textLength="9.2" lengthAdjust="spacingAndGlyphs">0</text>
<rect x="2069.76" y="628.3" width="14" height="13.5" fill="#e08c45"/>
<rect x="2106.3" y="510" width="298" height="32" fill="#8cc8c8" stroke="#101010" stroke-width="0.6"/>
<text x="2254.5" y="534.1" font-size="24" fill="#121212" text-anchor="middle">0x5F</text>
<circle cx="2107.4" cy="635" r="7" fill="#3f9a56"/>
<rect x="2126.14" y="622.7" width="24.6" height="24.6" rx="2.6" fill="#1c1c1c" stroke="#74cf74" stroke-width="1.4"/>
<text x="2139.14" y="641.6" font-size="18" fill="#74cf74" stroke="#74cf74" stroke-width="0.35" text-anchor="middle" textLength="9.2" lengthAdjust="spacingAndGlyphs">1</text>
<rect x="2157.28" y="622.7" width="24.6" height="24.6" rx="2.6" fill="#1c1c1c" stroke="#74cf74" stroke-width="1.4"/>
<text x="2170.28" y="641.6" font-size="18" fill="#74cf74" stroke="#74cf74" stroke-width="0.35" text-anchor="middle" textLength="9.2" lengthAdjust="spacingAndGlyphs">1</text>
<rect x="2188.42" y="622.7" width="24.6" height="24.6" rx="2.6" fill="#1c1c1c" stroke="#74cf74" stroke-width="1.4"/>
<text x="2201.42" y="641.6" font-size="18" fill="#74cf74" stroke="#74cf74" stroke-width="0.35" text-anchor="middle" textLength="9.2" lengthAdjust="spacingAndGlyphs">1</text>
<rect x="2219.56" y="622.7" width="24.6" height="24.6" rx="2.6" fill="#1c1c1c" stroke="#74cf74" stroke-width="1.4"/>
<text x="2232.56" y="641.6" font-size="18" fill="#74cf74" stroke="#74cf74" stroke-width="0.35" text-anchor="middle" textLength="9.2" lengthAdjust="spacingAndGlyphs">1</text>
<rect x="2250.7" y="622.7" width="24.6" height="24.6" rx="2.6" fill="#1c1c1c" stroke="#74cf74" stroke-width="1.4"/>
<text x="2263.7" y="641.6" font-size="18" fill="#74cf74" stroke="#74cf74" stroke-width="0.35" text-anchor="middle" textLength="9.2" lengthAdjust="spacingAndGlyphs">1</text>
<rect x="2281.84" y="622.7" width="24.6" height="24.6" rx="2.6" fill="#1c1c1c" stroke="#74cf74" stroke-width="1.4"/>
<text x="2294.84" y="641.6" font-size="18" fill="#74cf74" stroke="#74cf74" stroke-width="0.35" text-anchor="middle" textLength="9.2" lengthAdjust="spacingAndGlyphs">0</text>
<rect x="2312.98" y="622.7" width="24.6" height="24.6" rx="2.6" fill="#1c1c1c" stroke="#74cf74" stroke-width="1.4"/>
<text x="2325.98" y="641.6" font-size="18" fill="#74cf74" stroke="#74cf74" stroke-width="0.35" text-anchor="middle" textLength="9.2" lengthAdjust="spacingAndGlyphs">1</text>
<rect x="2344.12" y="622.7" width="24.6" height="24.6" rx="2.6" fill="#1c1c1c" stroke="#74cf74" stroke-width="1.4"/>
<text x="2357.12" y="641.6" font-size="18" fill="#74cf74" stroke="#74cf74" stroke-width="0.35" text-anchor="middle" textLength="9.2" lengthAdjust="spacingAndGlyphs">0</text>
<rect x="2381.16" y="628.3" width="14" height="13.5" fill="#e08c45"/>
<rect x="2417.7" y="510" width="298" height="32" fill="#8cc8c8" stroke="#101010" stroke-width="0.6"/>
<text x="2565.9" y="534.1" font-size="24" fill="#121212" text-anchor="middle">0xC1</text>
<circle cx="2418.8" cy="635" r="7" fill="#3f9a56"/>
<rect x="2437.54" y="622.7" width="24.6" height="24.6" rx="2.6" fill="#1c1c1c" stroke="#74cf74" stroke-width="1.4"/>
<text x="2450.54" y="641.6" font-size="18" fill="#74cf74" stroke="#74cf74" stroke-width="0.35" text-anchor="middle" textLength="9.2" lengthAdjust="spacingAndGlyphs">1</text>
<rect x="2468.68" y="622.7" width="24.6" height="24.6" rx="2.6" fill="#1c1c1c" stroke="#74cf74" stroke-width="1.4"/>
<text x="2481.68" y="641.6" font-size="18" fill="#74cf74" stroke="#74cf74" stroke-width="0.35" text-anchor="middle" textLength="9.2" lengthAdjust="spacingAndGlyphs">0</text>
<rect x="2499.82" y="622.7" width="24.6" height="24.6" rx="2.6" fill="#1c1c1c" stroke="#74cf74" stroke-width="1.4"/>
<text x="2512.82" y="641.6" font-size="18" fill="#74cf74" stroke="#74cf74" stroke-width="0.35" text-anchor="middle" textLength="9.2" lengthAdjust="spacingAndGlyphs">0</text>
<rect x="2530.96" y="622.7" width="24.6" height="24.6" rx="2.6" fill="#1c1c1c" stroke="#74cf74" stroke-width="1.4"/>
<text x="2543.96" y="641.6" font-size="18" fill="#74cf74" stroke="#74cf74" stroke-width="0.35" text-anchor="middle" textLength="9.2" lengthAdjust="spacingAndGlyphs">0</text>
<rect x="2562.1" y="622.7" width="24.6" height="24.6" rx="2.6" fill="#1c1c1c" stroke="#74cf74" stroke-width="1.4"/>
<text x="2575.1" y="641.6" font-size="18" fill="#74cf74" stroke="#74cf74" stroke-width="0.35" text-anchor="middle" textLength="9.2" lengthAdjust="spacingAndGlyphs">0</text>
<rect x="2593.24" y="622.7" width="24.6" height="24.6" rx="2.6" fill="#1c1c1c" stroke="#74cf74" stroke-width="1.4"/>
<text x="2606.24" y="641.6" font-size="18" fill="#74cf74" stroke="#74cf74" stroke-width="0.35" text-anchor="middle" textLength="9.2" lengthAdjust="spacingAndGlyphs">0</text>
<rect x="2624.38" y="622.7" width="24.6" height="24.6" rx="2.6" fill="#1c1c1c" stroke="#74cf74" stroke-width="1.4"/>
<text x="2637.38" y="641.6" font-size="18" fill="#74cf74" stroke="#74cf74" stroke-width="0.35" text-anchor="middle" textLength="9.2" lengthAdjust="spacingAndGlyphs">1</text>
<rect x="2655.52" y="622.7" width="24.6" height="24.6" rx="2.6" fill="#1c1c1c" stroke="#74cf74" stroke-width="1.4"/>
<text x="2668.52" y="641.6" font-size="18" fill="#74cf74" stroke="#74cf74" stroke-width="0.35" text-anchor="middle" textLength="9.2" lengthAdjust="spacingAndGlyphs">1</text>
<rect x="2692.56" y="628.3" width="14" height="13.5" fill="#e08c45"/>
<path d="M236.7 789V953M242.5 953V789M267.84 789V953M273.64 953V789M298.98 789V953M304.78 953V789M330.12 789V953M335.92 953V789M392.4 789V953M398.2 953V789M454.68 789V953M460.48 953V789M485.82 789V953M491.62 953V789M548.1 789V953M553.9 953V789M579.24 789V953M585.04 953V789M641.52 789V953M647.32 953V789M734.94 789V953M740.74 953V789M859.5 789V953M865.3 953V789M890.64 789V953M896.44 953V789M952.92 789V953M958.72 953V789M984.06 789V953M989.86 953V789M1015.2 789V953M1021 953V789M1046.34 789V953M1052.14 953V789M1077.48 789V953M1083.28 953V789M1108.62 789V953M1114.42 953V789M1170.9 789V953M1176.7 953V789M1264.32 789V953M1270.12 953V789M1295.46 789V953M1301.26 953V789M1326.6 789V953M1332.4 953V789M1357.74 789V953M1363.54 953V789M1388.88 789V953M1394.68 953V789M1420.02 789V953M1425.82 953V789M1482.3 789V953M1488.1 953V789M1544.58 789V953M1550.38 953V789M1575.72 789V953M1581.52 953V789M1606.86 789V953M1612.66 953V789M1638 789V953M1643.8 953V789M1669.14 789V953M1674.94 953V789M1700.28 789V953M1706.08 953V789M1731.42 789V953M1737.22 953V789M1793.7 789V953M1799.5 953V789M1855.98 789V953M1861.78 953V789M1887.12 789V953M1892.92 953V789M1949.4 789V953M1955.2 953V789M1980.54 789V953M1986.34 953V789M2042.82 789V953M2048.62 953V789M2105.1 789V953M2110.9 953V789M2291.94 789V953M2297.74 953V789M2354.22 789V953M2360.02 953V789M2416.5 789V953M2422.3 953V789M2478.78 789V953M2484.58 953V789M2509.92 789V953M2515.72 953V789M2541.06 789V953M2546.86 953V789M2572.2 789V953M2578 953V789M2603.34 789V953M2609.14 953V789" stroke="#69adf8" stroke-width="1.4" fill="none"/>
<path d="M203.3 789H237.4M236 953H243.2M241.8 789H268.54M267.14 953H274.34M272.94 789H299.68M298.28 953H305.48M304.08 789H330.82M329.42 953H336.62M335.22 789H393.1M391.7 953H398.9M397.5 789H455.38M453.98 953H461.18M459.78 789H486.52M485.12 953H492.32M490.92 789H548.8M547.4 953H554.6M553.2 789H579.94M578.54 953H585.74M584.34 789H642.22M640.82 953H648.02M646.62 789H735.64M734.24 953H741.44M740.04 789H860.2M858.8 953H866M864.6 789H891.34M889.94 953H897.14M895.74 789H953.62M952.22 953H959.42M958.02 789H984.76M983.36 953H990.56M989.16 789H1015.9M1014.5 953H1021.7M1020.3 789H1047.04M1045.64 953H1052.84M1051.44 789H1078.18M1076.78 953H1083.98M1082.58 789H1109.32M1107.92 953H1115.12M1113.72 789H1171.6M1170.2 953H1177.4M1176 789H1265.02M1263.62 953H1270.82M1269.42 789H1296.16M1294.76 953H1301.96M1300.56 789H1327.3M1325.9 953H1333.1M1331.7 789H1358.44M1357.04 953H1364.24M1362.84 789H1389.58M1388.18 953H1395.38M1393.98 789H1420.72M1419.32 953H1426.52M1425.12 789H1483M1481.6 953H1488.8M1487.4 789H1545.28M1543.88 953H1551.08M1549.68 789H1576.42M1575.02 953H1582.22M1580.82 789H1607.56M1606.16 953H1613.36M1611.96 789H1638.7M1637.3 953H1644.5M1643.1 789H1669.84M1668.44 953H1675.64M1674.24 789H1700.98M1699.58 953H1706.78M1705.38 789H1732.12M1730.72 953H1737.92M1736.52 789H1794.4M1793 953H1800.2M1798.8 789H1856.68M1855.28 953H1862.48M1861.08 789H1887.82M1886.42 953H1893.62M1892.22 789H1950.1M1948.7 953H1955.9M1954.5 789H1981.24M1979.84 953H1987.04M1985.64 789H2043.52M2042.12 953H2049.32M2047.92 789H2105.8M2104.4 953H2111.6M2110.2 789H2292.64M2291.24 953H2298.44M2297.04 789H2354.92M2353.52 953H2360.72M2359.32 789H2417.2M2415.8 953H2423M2421.6 789H2479.48M2478.08 953H2485.28M2483.88 789H2510.62M2509.22 953H2516.42M2515.02 789H2541.76M2540.36 953H2547.56M2546.16 789H2572.9M2571.5 953H2578.7M2577.3 789H2604.04M2602.64 953H2609.84M2608.44 789H3152.7" stroke="#69adf8" stroke-width="2" fill="none"/>
<rect x="237.9" y="740" width="298" height="32" fill="#aaa48c" stroke="#101010" stroke-width="0.6"/>
<text x="386.1" y="764.1" font-size="24" fill="#121212" text-anchor="middle">0x28</text>
<circle cx="239" cy="871" r="7" fill="#3f9a56"/>
<rect x="257.74" y="858.7" width="24.6" height="24.6" rx="2.6" fill="#1c1c1c" stroke="#69adf8" stroke-width="1.4"/>
<text x="270.74" y="877.6" font-size="18" fill="#69adf8" stroke="#69adf8" stroke-width="0.35" text-anchor="middle" textLength="9.2" lengthAdjust="spacingAndGlyphs">0</text>
<rect x="288.88" y="858.7" width="24.6" height="24.6" rx="2.6" fill="#1c1c1c" stroke="#69adf8" stroke-width="1.4"/>
<text x="301.88" y="877.6" font-size="18" fill="#69adf8" stroke="#69adf8" stroke-width="0.35" text-anchor="middle" textLength="9.2" lengthAdjust="spacingAndGlyphs">0</text>
<rect x="320.02" y="858.7" width="24.6" height="24.6" rx="2.6" fill="#1c1c1c" stroke="#69adf8" stroke-width="1.4"/>
<text x="333.02" y="877.6" font-size="18" fill="#69adf8" stroke="#69adf8" stroke-width="0.35" text-anchor="middle" textLength="9.2" lengthAdjust="spacingAndGlyphs">0</text>
<rect x="351.16" y="858.7" width="24.6" height="24.6" rx="2.6" fill="#1c1c1c" stroke="#69adf8" stroke-width="1.4"/>
<text x="364.16" y="877.6" font-size="18" fill="#69adf8" stroke="#69adf8" stroke-width="0.35" text-anchor="middle" textLength="9.2" lengthAdjust="spacingAndGlyphs">1</text>
<rect x="382.3" y="858.7" width="24.6" height="24.6" rx="2.6" fill="#1c1c1c" stroke="#69adf8" stroke-width="1.4"/>
<text x="395.3" y="877.6" font-size="18" fill="#69adf8" stroke="#69adf8" stroke-width="0.35" text-anchor="middle" textLength="9.2" lengthAdjust="spacingAndGlyphs">0</text>
<rect x="413.44" y="858.7" width="24.6" height="24.6" rx="2.6" fill="#1c1c1c" stroke="#69adf8" stroke-width="1.4"/>
<text x="426.44" y="877.6" font-size="18" fill="#69adf8" stroke="#69adf8" stroke-width="0.35" text-anchor="middle" textLength="9.2" lengthAdjust="spacingAndGlyphs">1</text>
<rect x="444.58" y="858.7" width="24.6" height="24.6" rx="2.6" fill="#1c1c1c" stroke="#69adf8" stroke-width="1.4"/>
<text x="457.58" y="877.6" font-size="18" fill="#69adf8" stroke="#69adf8" stroke-width="0.35" text-anchor="middle" textLength="9.2" lengthAdjust="spacingAndGlyphs">0</text>
<rect x="475.72" y="858.7" width="24.6" height="24.6" rx="2.6" fill="#1c1c1c" stroke="#69adf8" stroke-width="1.4"/>
<text x="488.72" y="877.6" font-size="18" fill="#69adf8" stroke="#69adf8" stroke-width="0.35" text-anchor="middle" textLength="9.2" lengthAdjust="spacingAndGlyphs">0</text>
<rect x="512.76" y="864.3" width="14" height="13.5" fill="#e08c45"/>
<rect x="549.3" y="740" width="298" height="32" fill="#aaa48c" stroke="#101010" stroke-width="0.6"/>
<text x="697.5" y="764.1" font-size="24" fill="#121212" text-anchor="middle">0xDA</text>
<circle cx="550.4" cy="871" r="7" fill="#3f9a56"/>
<rect x="569.14" y="858.7" width="24.6" height="24.6" rx="2.6" fill="#1c1c1c" stroke="#69adf8" stroke-width="1.4"/>
<text x="582.14" y="877.6" font-size="18" fill="#69adf8" stroke="#69adf8" stroke-width="0.35" text-anchor="middle" textLength="9.2" lengthAdjust="spacingAndGlyphs">0</text>
<rect x="600.28" y="858.7" width="24.6" height="24.6" rx="2.6" fill="#1c1c1c" stroke="#69adf8" stroke-width="1.4"/>
<text x="613.28" y="877.6" font-size="18" fill="#69adf8" stroke="#69adf8" stroke-width="0.35" text-anchor="middle" textLength="9.2" lengthAdjust="spacingAndGlyphs">1</text>
<rect x="631.42" y="858.7" width="24.6" height="24.6" rx="2.6" fill="#1c1c1c" stroke="#69adf8" stroke-width="1.4"/>
<text x="644.42" y="877.6" font-size="18" fill="#69adf8" stroke="#69adf8" stroke-width="0.35" text-anchor="middle" textLength="9.2" lengthAdjust="spacingAndGlyphs">0</text>
<rect x="662.56" y="858.7" width="24.6" height="24.6" rx="2.6" fill="#1c1c1c" stroke="#69adf8" stroke-width="1.4"/>
<text x="675.56" y="877.6" font-size="18" fill="#69adf8" stroke="#69adf8" stroke-width="0.35" text-anchor="middle" textLength="9.2" lengthAdjust="spacingAndGlyphs">1</text>
<rect x="693.7" y="858.7" width="24.6" height="24.6" rx="2.6" fill="#1c1c1c" stroke="#69adf8" stroke-width="1.4"/>
<text x="706.7" y="877.6" font-size="18" fill="#69adf8" stroke="#69adf8" stroke-width="0.35" text-anchor="middle" textLength="9.2" lengthAdjust="spacingAndGlyphs">1</text>
<rect x="724.84" y="858.7" width="24.6" height="24.6" rx="2.6" fill="#1c1c1c" stroke="#69adf8" stroke-width="1.4"/>
<text x="737.84" y="877.6" font-size="18" fill="#69adf8" stroke="#69adf8" stroke-width="0.35" text-anchor="middle" textLength="9.2" lengthAdjust="spacingAndGlyphs">0</text>
<rect x="755.98" y="858.7" width="24.6" height="24.6" rx="2.6" fill="#1c1c1c" stroke="#69adf8" stroke-width="1.4"/>
<text x="768.98" y="877.6" font-size="18" fill="#69adf8" stroke="#69adf8" stroke-width="0.35" text-anchor="middle" textLength="9.2" lengthAdjust="spacingAndGlyphs">1</text>
<rect x="787.12" y="858.7" width="24.6" height="24.6" rx="2.6" fill="#1c1c1c" stroke="#69adf8" stroke-width="1.4"/>
<text x="800.12" y="877.6" font-size="18" fill="#69adf8" stroke="#69adf8" stroke-width="0.35" text-anchor="middle" textLength="9.2" lengthAdjust="spacingAndGlyphs">1</text>
<rect x="824.16" y="864.3" width="14" height="13.5" fill="#e08c45"/>
<rect x="860.7" y="740" width="298" height="32" fill="#aaa48c" stroke="#101010" stroke-width="0.6"/>
<text x="1008.9" y="764.1" font-size="24" fill="#121212" text-anchor="middle">0x02</text>
<circle cx="861.8" cy="871" r="7" fill="#3f9a56"/>
<rect x="880.54" y="858.7" width="24.6" height="24.6" rx="2.6" fill="#1c1c1c" stroke="#69adf8" stroke-width="1.4"/>
<text x="893.54" y="877.6" font-size="18" fill="#69adf8" stroke="#69adf8" stroke-width="0.35" text-anchor="middle" textLength="9.2" lengthAdjust="spacingAndGlyphs">0</text>
<rect x="911.68" y="858.7" width="24.6" height="24.6" rx="2.6" fill="#1c1c1c" stroke="#69adf8" stroke-width="1.4"/>
<text x="924.68" y="877.6" font-size="18" fill="#69adf8" stroke="#69adf8" stroke-width="0.35" text-anchor="middle" textLength="9.2" lengthAdjust="spacingAndGlyphs">1</text>
<rect x="942.82" y="858.7" width="24.6" height="24.6" rx="2.6" fill="#1c1c1c" stroke="#69adf8" stroke-width="1.4"/>
<text x="955.82" y="877.6" font-size="18" fill="#69adf8" stroke="#69adf8" stroke-width="0.35" text-anchor="middle" textLength="9.2" lengthAdjust="spacingAndGlyphs">0</text>
<rect x="973.96" y="858.7" width="24.6" height="24.6" rx="2.6" fill="#1c1c1c" stroke="#69adf8" stroke-width="1.4"/>
<text x="986.96" y="877.6" font-size="18" fill="#69adf8" stroke="#69adf8" stroke-width="0.35" text-anchor="middle" textLength="9.2" lengthAdjust="spacingAndGlyphs">0</text>
<rect x="1005.1" y="858.7" width="24.6" height="24.6" rx="2.6" fill="#1c1c1c" stroke="#69adf8" stroke-width="1.4"/>
<text x="1018.1" y="877.6" font-size="18" fill="#69adf8" stroke="#69adf8" stroke-width="0.35" text-anchor="middle" textLength="9.2" lengthAdjust="spacingAndGlyphs">0</text>
<rect x="1036.24" y="858.7" width="24.6" height="24.6" rx="2.6" fill="#1c1c1c" stroke="#69adf8" stroke-width="1.4"/>
<text x="1049.24" y="877.6" font-size="18" fill="#69adf8" stroke="#69adf8" stroke-width="0.35" text-anchor="middle" textLength="9.2" lengthAdjust="spacingAndGlyphs">0</text>
<rect x="1067.38" y="858.7" width="24.6" height="24.6" rx="2.6" fill="#1c1c1c" stroke="#69adf8" stroke-width="1.4"/>
<text x="1080.38" y="877.6" font-size="18" fill="#69adf8" stroke="#69adf8" stroke-width="0.35" text-anchor="middle" textLength="9.2" lengthAdjust="spacingAndGlyphs">0</text>
<rect x="1098.52" y="858.7" width="24.6" height="24.6" rx="2.6" fill="#1c1c1c" stroke="#69adf8" stroke-width="1.4"/>
<text x="1111.52" y="877.6" font-size="18" fill="#69adf8" stroke="#69adf8" stroke-width="0.35" text-anchor="middle" textLength="9.2" lengthAdjust="spacingAndGlyphs">0</text>
<rect x="1135.56" y="864.3" width="14" height="13.5" fill="#e08c45"/>
<rect x="1172.1" y="740" width="298" height="32" fill="#aaa48c" stroke="#101010" stroke-width="0.6"/>
<text x="1320.3" y="764.1" font-size="24" fill="#121212" text-anchor="middle">0x03</text>
<circle cx="1173.2" cy="871" r="7" fill="#3f9a56"/>
<rect x="1191.94" y="858.7" width="24.6" height="24.6" rx="2.6" fill="#1c1c1c" stroke="#69adf8" stroke-width="1.4"/>
<text x="1204.94" y="877.6" font-size="18" fill="#69adf8" stroke="#69adf8" stroke-width="0.35" text-anchor="middle" textLength="9.2" lengthAdjust="spacingAndGlyphs">1</text>
<rect x="1223.08" y="858.7" width="24.6" height="24.6" rx="2.6" fill="#1c1c1c" stroke="#69adf8" stroke-width="1.4"/>
<text x="1236.08" y="877.6" font-size="18" fill="#69adf8" stroke="#69adf8" stroke-width="0.35" text-anchor="middle" textLength="9.2" lengthAdjust="spacingAndGlyphs">1</text>
<rect x="1254.22" y="858.7" width="24.6" height="24.6" rx="2.6" fill="#1c1c1c" stroke="#69adf8" stroke-width="1.4"/>
<text x="1267.22" y="877.6" font-size="18" fill="#69adf8" stroke="#69adf8" stroke-width="0.35" text-anchor="middle" textLength="9.2" lengthAdjust="spacingAndGlyphs">0</text>
<rect x="1285.36" y="858.7" width="24.6" height="24.6" rx="2.6" fill="#1c1c1c" stroke="#69adf8" stroke-width="1.4"/>
<text x="1298.36" y="877.6" font-size="18" fill="#69adf8" stroke="#69adf8" stroke-width="0.35" text-anchor="middle" textLength="9.2" lengthAdjust="spacingAndGlyphs">0</text>
<rect x="1316.5" y="858.7" width="24.6" height="24.6" rx="2.6" fill="#1c1c1c" stroke="#69adf8" stroke-width="1.4"/>
<text x="1329.5" y="877.6" font-size="18" fill="#69adf8" stroke="#69adf8" stroke-width="0.35" text-anchor="middle" textLength="9.2" lengthAdjust="spacingAndGlyphs">0</text>
<rect x="1347.64" y="858.7" width="24.6" height="24.6" rx="2.6" fill="#1c1c1c" stroke="#69adf8" stroke-width="1.4"/>
<text x="1360.64" y="877.6" font-size="18" fill="#69adf8" stroke="#69adf8" stroke-width="0.35" text-anchor="middle" textLength="9.2" lengthAdjust="spacingAndGlyphs">0</text>
<rect x="1378.78" y="858.7" width="24.6" height="24.6" rx="2.6" fill="#1c1c1c" stroke="#69adf8" stroke-width="1.4"/>
<text x="1391.78" y="877.6" font-size="18" fill="#69adf8" stroke="#69adf8" stroke-width="0.35" text-anchor="middle" textLength="9.2" lengthAdjust="spacingAndGlyphs">0</text>
<rect x="1409.92" y="858.7" width="24.6" height="24.6" rx="2.6" fill="#1c1c1c" stroke="#69adf8" stroke-width="1.4"/>
<text x="1422.92" y="877.6" font-size="18" fill="#69adf8" stroke="#69adf8" stroke-width="0.35" text-anchor="middle" textLength="9.2" lengthAdjust="spacingAndGlyphs">0</text>
<rect x="1446.96" y="864.3" width="14" height="13.5" fill="#e08c45"/>
<rect x="1483.5" y="740" width="298" height="32" fill="#aaa48c" stroke="#101010" stroke-width="0.6"/>
<text x="1631.7" y="764.1" font-size="24" fill="#121212" text-anchor="middle">0x01</text>
<circle cx="1484.6" cy="871" r="7" fill="#3f9a56"/>
<rect x="1503.34" y="858.7" width="24.6" height="24.6" rx="2.6" fill="#1c1c1c" stroke="#69adf8" stroke-width="1.4"/>
<text x="1516.34" y="877.6" font-size="18" fill="#69adf8" stroke="#69adf8" stroke-width="0.35" text-anchor="middle" textLength="9.2" lengthAdjust="spacingAndGlyphs">1</text>
<rect x="1534.48" y="858.7" width="24.6" height="24.6" rx="2.6" fill="#1c1c1c" stroke="#69adf8" stroke-width="1.4"/>
<text x="1547.48" y="877.6" font-size="18" fill="#69adf8" stroke="#69adf8" stroke-width="0.35" text-anchor="middle" textLength="9.2" lengthAdjust="spacingAndGlyphs">0</text>
<rect x="1565.62" y="858.7" width="24.6" height="24.6" rx="2.6" fill="#1c1c1c" stroke="#69adf8" stroke-width="1.4"/>
<text x="1578.62" y="877.6" font-size="18" fill="#69adf8" stroke="#69adf8" stroke-width="0.35" text-anchor="middle" textLength="9.2" lengthAdjust="spacingAndGlyphs">0</text>
<rect x="1596.76" y="858.7" width="24.6" height="24.6" rx="2.6" fill="#1c1c1c" stroke="#69adf8" stroke-width="1.4"/>
<text x="1609.76" y="877.6" font-size="18" fill="#69adf8" stroke="#69adf8" stroke-width="0.35" text-anchor="middle" textLength="9.2" lengthAdjust="spacingAndGlyphs">0</text>
<rect x="1627.9" y="858.7" width="24.6" height="24.6" rx="2.6" fill="#1c1c1c" stroke="#69adf8" stroke-width="1.4"/>
<text x="1640.9" y="877.6" font-size="18" fill="#69adf8" stroke="#69adf8" stroke-width="0.35" text-anchor="middle" textLength="9.2" lengthAdjust="spacingAndGlyphs">0</text>
<rect x="1659.04" y="858.7" width="24.6" height="24.6" rx="2.6" fill="#1c1c1c" stroke="#69adf8" stroke-width="1.4"/>
<text x="1672.04" y="877.6" font-size="18" fill="#69adf8" stroke="#69adf8" stroke-width="0.35" text-anchor="middle" textLength="9.2" lengthAdjust="spacingAndGlyphs">0</text>
<rect x="1690.18" y="858.7" width="24.6" height="24.6" rx="2.6" fill="#1c1c1c" stroke="#69adf8" stroke-width="1.4"/>
<text x="1703.18" y="877.6" font-size="18" fill="#69adf8" stroke="#69adf8" stroke-width="0.35" text-anchor="middle" textLength="9.2" lengthAdjust="spacingAndGlyphs">0</text>
<rect x="1721.32" y="858.7" width="24.6" height="24.6" rx="2.6" fill="#1c1c1c" stroke="#69adf8" stroke-width="1.4"/>
<text x="1734.32" y="877.6" font-size="18" fill="#69adf8" stroke="#69adf8" stroke-width="0.35" text-anchor="middle" textLength="9.2" lengthAdjust="spacingAndGlyphs">0</text>
<rect x="1758.36" y="864.3" width="14" height="13.5" fill="#e08c45"/>
<rect x="1794.9" y="740" width="298" height="32" fill="#aaa48c" stroke="#101010" stroke-width="0.6"/>
<text x="1943.1" y="764.1" font-size="24" fill="#121212" text-anchor="middle">0x49</text>
<circle cx="1796" cy="871" r="7" fill="#3f9a56"/>
<rect x="1814.74" y="858.7" width="24.6" height="24.6" rx="2.6" fill="#1c1c1c" stroke="#69adf8" stroke-width="1.4"/>
<text x="1827.74" y="877.6" font-size="18" fill="#69adf8" stroke="#69adf8" stroke-width="0.35" text-anchor="middle" textLength="9.2" lengthAdjust="spacingAndGlyphs">1</text>
<rect x="1845.88" y="858.7" width="24.6" height="24.6" rx="2.6" fill="#1c1c1c" stroke="#69adf8" stroke-width="1.4"/>
<text x="1858.88" y="877.6" font-size="18" fill="#69adf8" stroke="#69adf8" stroke-width="0.35" text-anchor="middle" textLength="9.2" lengthAdjust="spacingAndGlyphs">0</text>
<rect x="1877.02" y="858.7" width="24.6" height="24.6" rx="2.6" fill="#1c1c1c" stroke="#69adf8" stroke-width="1.4"/>
<text x="1890.02" y="877.6" font-size="18" fill="#69adf8" stroke="#69adf8" stroke-width="0.35" text-anchor="middle" textLength="9.2" lengthAdjust="spacingAndGlyphs">0</text>
<rect x="1908.16" y="858.7" width="24.6" height="24.6" rx="2.6" fill="#1c1c1c" stroke="#69adf8" stroke-width="1.4"/>
<text x="1921.16" y="877.6" font-size="18" fill="#69adf8" stroke="#69adf8" stroke-width="0.35" text-anchor="middle" textLength="9.2" lengthAdjust="spacingAndGlyphs">1</text>
<rect x="1939.3" y="858.7" width="24.6" height="24.6" rx="2.6" fill="#1c1c1c" stroke="#69adf8" stroke-width="1.4"/>
<text x="1952.3" y="877.6" font-size="18" fill="#69adf8" stroke="#69adf8" stroke-width="0.35" text-anchor="middle" textLength="9.2" lengthAdjust="spacingAndGlyphs">0</text>
<rect x="1970.44" y="858.7" width="24.6" height="24.6" rx="2.6" fill="#1c1c1c" stroke="#69adf8" stroke-width="1.4"/>
<text x="1983.44" y="877.6" font-size="18" fill="#69adf8" stroke="#69adf8" stroke-width="0.35" text-anchor="middle" textLength="9.2" lengthAdjust="spacingAndGlyphs">0</text>
<rect x="2001.58" y="858.7" width="24.6" height="24.6" rx="2.6" fill="#1c1c1c" stroke="#69adf8" stroke-width="1.4"/>
<text x="2014.58" y="877.6" font-size="18" fill="#69adf8" stroke="#69adf8" stroke-width="0.35" text-anchor="middle" textLength="9.2" lengthAdjust="spacingAndGlyphs">1</text>
<rect x="2032.72" y="858.7" width="24.6" height="24.6" rx="2.6" fill="#1c1c1c" stroke="#69adf8" stroke-width="1.4"/>
<text x="2045.72" y="877.6" font-size="18" fill="#69adf8" stroke="#69adf8" stroke-width="0.35" text-anchor="middle" textLength="9.2" lengthAdjust="spacingAndGlyphs">0</text>
<rect x="2069.76" y="864.3" width="14" height="13.5" fill="#e08c45"/>
<rect x="2106.3" y="740" width="298" height="32" fill="#aaa48c" stroke="#101010" stroke-width="0.6"/>
<text x="2254.5" y="764.1" font-size="24" fill="#121212" text-anchor="middle">0x5F</text>
<circle cx="2107.4" cy="871" r="7" fill="#3f9a56"/>
<rect x="2126.14" y="858.7" width="24.6" height="24.6" rx="2.6" fill="#1c1c1c" stroke="#69adf8" stroke-width="1.4"/>
<text x="2139.14" y="877.6" font-size="18" fill="#69adf8" stroke="#69adf8" stroke-width="0.35" text-anchor="middle" textLength="9.2" lengthAdjust="spacingAndGlyphs">1</text>
<rect x="2157.28" y="858.7" width="24.6" height="24.6" rx="2.6" fill="#1c1c1c" stroke="#69adf8" stroke-width="1.4"/>
<text x="2170.28" y="877.6" font-size="18" fill="#69adf8" stroke="#69adf8" stroke-width="0.35" text-anchor="middle" textLength="9.2" lengthAdjust="spacingAndGlyphs">1</text>
<rect x="2188.42" y="858.7" width="24.6" height="24.6" rx="2.6" fill="#1c1c1c" stroke="#69adf8" stroke-width="1.4"/>
<text x="2201.42" y="877.6" font-size="18" fill="#69adf8" stroke="#69adf8" stroke-width="0.35" text-anchor="middle" textLength="9.2" lengthAdjust="spacingAndGlyphs">1</text>
<rect x="2219.56" y="858.7" width="24.6" height="24.6" rx="2.6" fill="#1c1c1c" stroke="#69adf8" stroke-width="1.4"/>
<text x="2232.56" y="877.6" font-size="18" fill="#69adf8" stroke="#69adf8" stroke-width="0.35" text-anchor="middle" textLength="9.2" lengthAdjust="spacingAndGlyphs">1</text>
<rect x="2250.7" y="858.7" width="24.6" height="24.6" rx="2.6" fill="#1c1c1c" stroke="#69adf8" stroke-width="1.4"/>
<text x="2263.7" y="877.6" font-size="18" fill="#69adf8" stroke="#69adf8" stroke-width="0.35" text-anchor="middle" textLength="9.2" lengthAdjust="spacingAndGlyphs">1</text>
<rect x="2281.84" y="858.7" width="24.6" height="24.6" rx="2.6" fill="#1c1c1c" stroke="#69adf8" stroke-width="1.4"/>
<text x="2294.84" y="877.6" font-size="18" fill="#69adf8" stroke="#69adf8" stroke-width="0.35" text-anchor="middle" textLength="9.2" lengthAdjust="spacingAndGlyphs">0</text>
<rect x="2312.98" y="858.7" width="24.6" height="24.6" rx="2.6" fill="#1c1c1c" stroke="#69adf8" stroke-width="1.4"/>
<text x="2325.98" y="877.6" font-size="18" fill="#69adf8" stroke="#69adf8" stroke-width="0.35" text-anchor="middle" textLength="9.2" lengthAdjust="spacingAndGlyphs">1</text>
<rect x="2344.12" y="858.7" width="24.6" height="24.6" rx="2.6" fill="#1c1c1c" stroke="#69adf8" stroke-width="1.4"/>
<text x="2357.12" y="877.6" font-size="18" fill="#69adf8" stroke="#69adf8" stroke-width="0.35" text-anchor="middle" textLength="9.2" lengthAdjust="spacingAndGlyphs">0</text>
<rect x="2381.16" y="864.3" width="14" height="13.5" fill="#e08c45"/>
<rect x="2417.7" y="740" width="298" height="32" fill="#aaa48c" stroke="#101010" stroke-width="0.6"/>
<text x="2565.9" y="764.1" font-size="24" fill="#121212" text-anchor="middle">0xC1</text>
<circle cx="2418.8" cy="871" r="7" fill="#3f9a56"/>
<rect x="2437.54" y="858.7" width="24.6" height="24.6" rx="2.6" fill="#1c1c1c" stroke="#69adf8" stroke-width="1.4"/>
<text x="2450.54" y="877.6" font-size="18" fill="#69adf8" stroke="#69adf8" stroke-width="0.35" text-anchor="middle" textLength="9.2" lengthAdjust="spacingAndGlyphs">1</text>
<rect x="2468.68" y="858.7" width="24.6" height="24.6" rx="2.6" fill="#1c1c1c" stroke="#69adf8" stroke-width="1.4"/>
<text x="2481.68" y="877.6" font-size="18" fill="#69adf8" stroke="#69adf8" stroke-width="0.35" text-anchor="middle" textLength="9.2" lengthAdjust="spacingAndGlyphs">0</text>
<rect x="2499.82" y="858.7" width="24.6" height="24.6" rx="2.6" fill="#1c1c1c" stroke="#69adf8" stroke-width="1.4"/>
<text x="2512.82" y="877.6" font-size="18" fill="#69adf8" stroke="#69adf8" stroke-width="0.35" text-anchor="middle" textLength="9.2" lengthAdjust="spacingAndGlyphs">0</text>
<rect x="2530.96" y="858.7" width="24.6" height="24.6" rx="2.6" fill="#1c1c1c" stroke="#69adf8" stroke-width="1.4"/>
<text x="2543.96" y="877.6" font-size="18" fill="#69adf8" stroke="#69adf8" stroke-width="0.35" text-anchor="middle" textLength="9.2" lengthAdjust="spacingAndGlyphs">0</text>
<rect x="2562.1" y="858.7" width="24.6" height="24.6" rx="2.6" fill="#1c1c1c" stroke="#69adf8" stroke-width="1.4"/>
<text x="2575.1" y="877.6" font-size="18" fill="#69adf8" stroke="#69adf8" stroke-width="0.35" text-anchor="middle" textLength="9.2" lengthAdjust="spacingAndGlyphs">0</text>
<rect x="2593.24" y="858.7" width="24.6" height="24.6" rx="2.6" fill="#1c1c1c" stroke="#69adf8" stroke-width="1.4"/>
<text x="2606.24" y="877.6" font-size="18" fill="#69adf8" stroke="#69adf8" stroke-width="0.35" text-anchor="middle" textLength="9.2" lengthAdjust="spacingAndGlyphs">0</text>
<rect x="2624.38" y="858.7" width="24.6" height="24.6" rx="2.6" fill="#1c1c1c" stroke="#69adf8" stroke-width="1.4"/>
<text x="2637.38" y="877.6" font-size="18" fill="#69adf8" stroke="#69adf8" stroke-width="0.35" text-anchor="middle" textLength="9.2" lengthAdjust="spacingAndGlyphs">1</text>
<rect x="2655.52" y="858.7" width="24.6" height="24.6" rx="2.6" fill="#1c1c1c" stroke="#69adf8" stroke-width="1.4"/>
<text x="2668.52" y="877.6" font-size="18" fill="#69adf8" stroke="#69adf8" stroke-width="0.35" text-anchor="middle" textLength="9.2" lengthAdjust="spacingAndGlyphs">1</text>
<rect x="2692.56" y="864.3" width="14" height="13.5" fill="#e08c45"/>
<rect x="214" y="105.45" width="14.7" height="21.5" rx="5" fill="#151515" fill-opacity="0.75"/>
<text x="221.6" y="122.1" font-size="16.5" font-weight="bold" fill="#ffffff" text-anchor="middle" textLength="9.6" lengthAdjust="spacingAndGlyphs">H</text>
<rect x="214.4" y="293.2" width="12.4" height="22" rx="5" fill="#151515" fill-opacity="0.75"/>
<text x="216.5" y="310.1" font-size="16.5" font-weight="bold" fill="#ffffff" textLength="8.2" lengthAdjust="spacingAndGlyphs">L</text>
<rect x="214" y="369.45" width="14.7" height="21.5" rx="5" fill="#151515" fill-opacity="0.75"/>
<text x="221.6" y="386.1" font-size="16.5" font-weight="bold" fill="#ffffff" text-anchor="middle" textLength="9.6" lengthAdjust="spacingAndGlyphs">H</text>
<rect x="214.4" y="471.2" width="12.4" height="22" rx="5" fill="#151515" fill-opacity="0.75"/>
<text x="216.5" y="488.1" font-size="16.5" font-weight="bold" fill="#ffffff" textLength="8.2" lengthAdjust="spacingAndGlyphs">L</text>
<rect x="214" y="547.45" width="14.7" height="21.5" rx="5" fill="#151515" fill-opacity="0.75"/>
<text x="221.6" y="564.1" font-size="16.5" font-weight="bold" fill="#ffffff" text-anchor="middle" textLength="9.6" lengthAdjust="spacingAndGlyphs">H</text>
<rect x="214.4" y="701.2" width="12.4" height="22" rx="5" fill="#151515" fill-opacity="0.75"/>
<text x="216.5" y="718.1" font-size="16.5" font-weight="bold" fill="#ffffff" textLength="8.2" lengthAdjust="spacingAndGlyphs">L</text>
<rect x="214" y="777.45" width="14.7" height="21.5" rx="5" fill="#151515" fill-opacity="0.75"/>
<text x="221.6" y="794.1" font-size="16.5" font-weight="bold" fill="#ffffff" text-anchor="middle" textLength="9.6" lengthAdjust="spacingAndGlyphs">H</text>
<rect x="214.4" y="943.2" width="12.4" height="22" rx="5" fill="#151515" fill-opacity="0.75"/>
<text x="216.5" y="960.1" font-size="16.5" font-weight="bold" fill="#ffffff" textLength="8.2" lengthAdjust="spacingAndGlyphs">L</text>
<text x="21.3" y="119" font-size="19.8" font-weight="normal" fill="#cdcdcd" textLength="13.2" lengthAdjust="spacingAndGlyphs">D</text>
<text x="35.6" y="119" font-size="19.8" font-weight="normal" fill="#cdcdcd" textLength="11.4" lengthAdjust="spacingAndGlyphs">0</text>
<text x="84" y="118.4" font-size="28.5" font-weight="normal" fill="#ebebeb" textLength="41.5" lengthAdjust="spacingAndGlyphs">soc</text>
<rect x="84.1" y="152" width="14" height="14.3" rx="3" fill="#cdb97b"/>
<text x="110.8" y="166.3" font-size="19.8" font-weight="normal" fill="#f0f0f0" textLength="72.5" lengthAdjust="spacingAndGlyphs">Async ...</text>
<text x="18.4" y="383.2" font-size="19.8" font-weight="normal" fill="#c39a7d" textLength="14.2" lengthAdjust="spacingAndGlyphs">D</text>
<text x="34" y="383.2" font-size="19.8" font-weight="normal" fill="#c39a7d" textLength="7.6" lengthAdjust="spacingAndGlyphs">1</text>
<text x="77.6" y="382.2" font-size="28.5" font-weight="normal" fill="#ebebeb" textLength="49.7" lengthAdjust="spacingAndGlyphs">mcu</text>
<rect x="77" y="416" width="14" height="14" rx="3" fill="#8fcb92"/>
<text x="104.1" y="430" font-size="19.8" font-weight="normal" fill="#f0f0f0" textLength="72.5" lengthAdjust="spacingAndGlyphs">Async ...</text>
<text x="31.6" y="561" font-size="19.8" font-weight="normal" fill="#6cc26c" textLength="13.8" lengthAdjust="spacingAndGlyphs">D</text>
<text x="46.3" y="561" font-size="19.8" font-weight="normal" fill="#6cc26c" textLength="11.3" lengthAdjust="spacingAndGlyphs">5</text>
<text x="103.2" y="560.3" font-size="28.5" font-weight="normal" fill="#ebebeb" textLength="43.5" lengthAdjust="spacingAndGlyphs">ir tx</text>
<rect x="103.9" y="594" width="14.1" height="13.8" rx="3" fill="#8cc8c8"/>
<text x="129.3" y="607.8" font-size="19.8" font-weight="normal" fill="#f0f0f0" textLength="38.5" lengthAdjust="spacingAndGlyphs">IrDA</text>
<text x="29.9" y="791" font-size="19.8" font-weight="normal" fill="#5fa2ee" textLength="13.9" lengthAdjust="spacingAndGlyphs">D</text>
<text x="44.4" y="791" font-size="19.8" font-weight="normal" fill="#5fa2ee" textLength="11" lengthAdjust="spacingAndGlyphs">6</text>
<text x="99.6" y="790.3" font-size="28.5" font-weight="normal" fill="#ebebeb" textLength="43" lengthAdjust="spacingAndGlyphs">ir rx</text>
<rect x="100.1" y="824" width="13.9" height="13.8" rx="3" fill="#aaa48c"/>
<text x="125" y="837.8" font-size="19.8" font-weight="normal" fill="#f0f0f0" textLength="56.5" lengthAdjust="spacingAndGlyphs">IrDA ...</text>
<path d="M224 519.5H230.4L233.4 524.95L230.4 530.4H224L221 524.95Z" fill="#666666" stroke="#666666" stroke-width="1.2" stroke-linejoin="round"/>
<path d="M253.2 529.3 C250 521, 243 519.5, 239 526.5" stroke="#666666" stroke-width="2.4" fill="none" stroke-linecap="round"/>
<path d="M237.2 520.8 L238.2 529.3 L245.2 528.4" stroke="#666666" stroke-width="2.2" fill="none" stroke-linecap="round"/>
<path d="M3125.7 519.3H3132.2L3135.2 524.85L3132.2 530.4H3125.7L3122.7 524.85Z" fill="#666666" stroke="#666666" stroke-width="1.2" stroke-linejoin="round"/>
<path d="M3102.8 529.3 C3106 521, 3113 519.5, 3117 526.5" stroke="#666666" stroke-width="2.4" fill="none" stroke-linecap="round"/>
<path d="M3118.8 520.8 L3117.8 529.3 L3110.8 528.4" stroke="#666666" stroke-width="2.2" fill="none" stroke-linecap="round"/>
</svg></body></html>
